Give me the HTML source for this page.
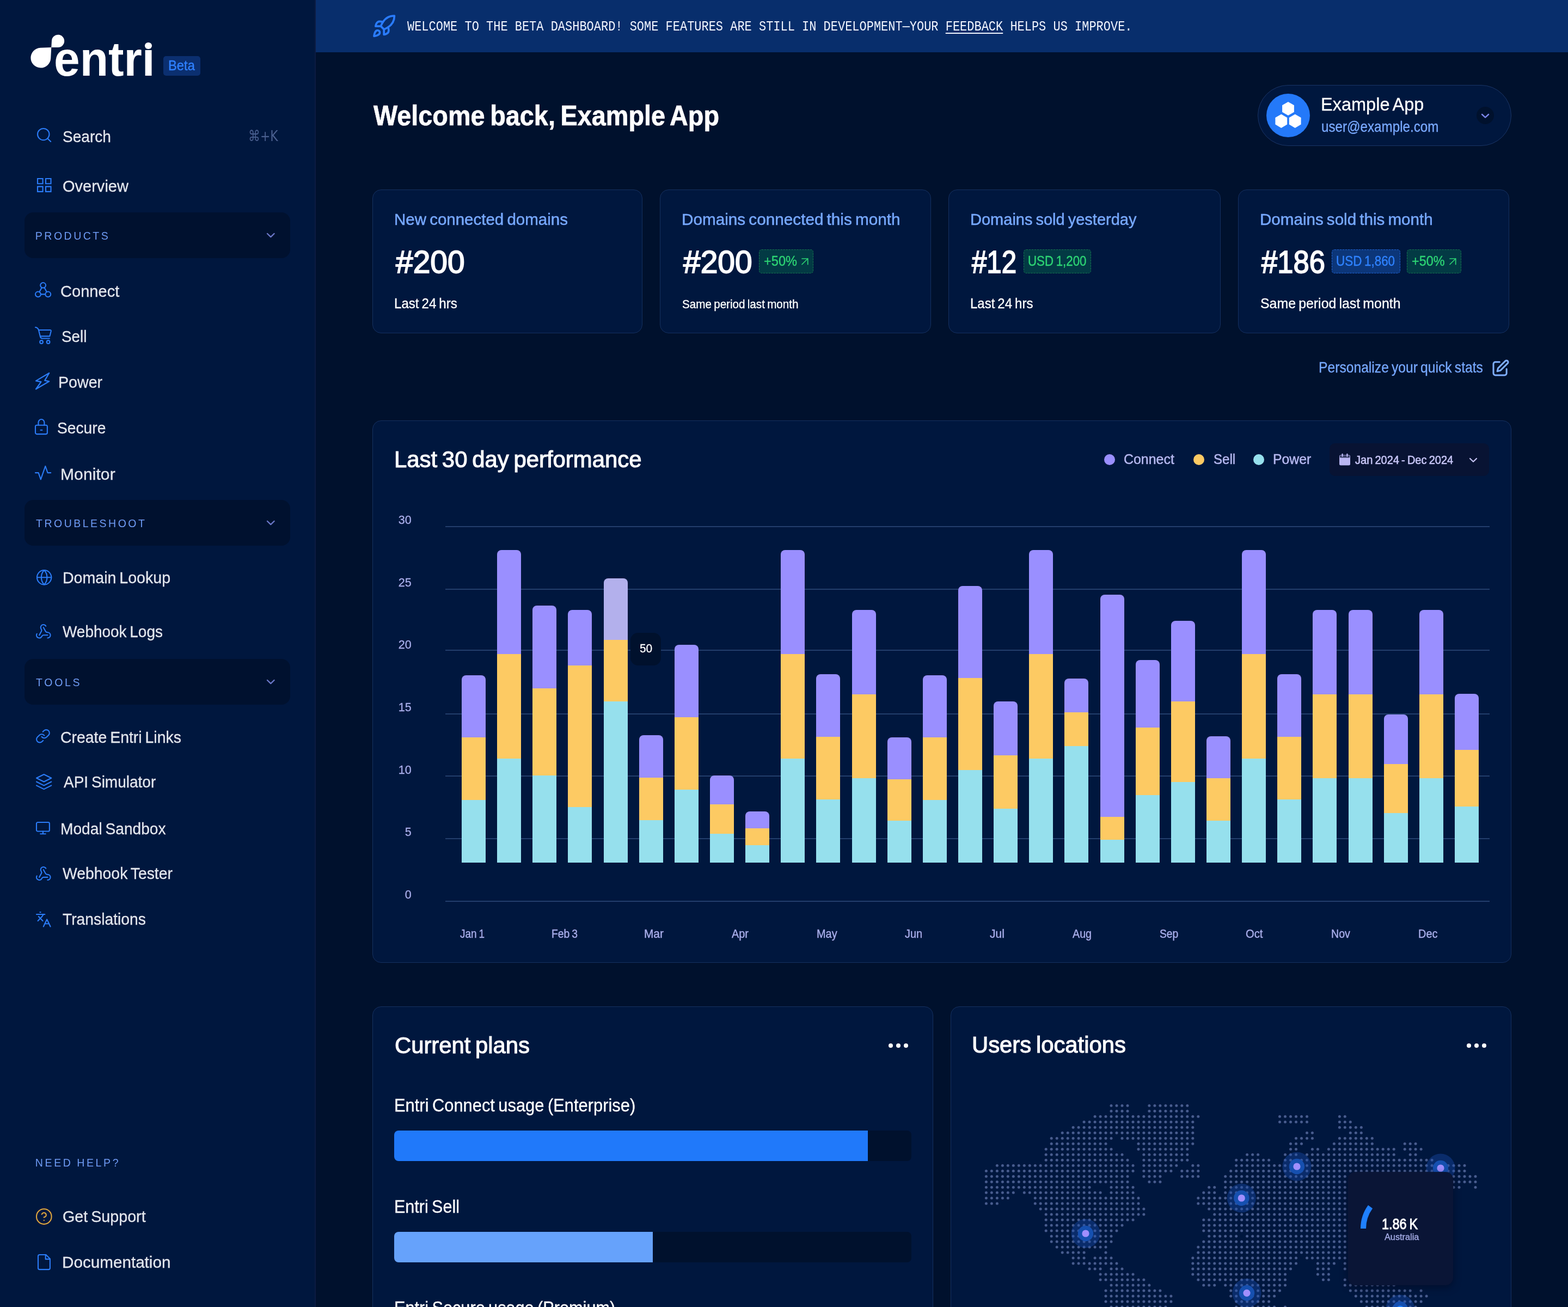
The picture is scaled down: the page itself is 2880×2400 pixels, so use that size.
<!DOCTYPE html>
<html lang="en">
<head>
<meta charset="utf-8">
<title>Entri Dashboard</title>
<style>
html,body{margin:0;padding:0;background:#00112d;}
body{position:relative;width:2880px;height:2400px;overflow:hidden;font-family:"Liberation Sans",sans-serif;color:#fff;}
#app{position:absolute;left:0;top:0;width:2880px;height:2400px;overflow:hidden;transform-origin:0 0;background:#00112d;filter:blur(0.6px);}
#app div,#app span,#app svg,#app aside,#app header,#app main,#app section,#app nav,#app a,#app h1,#app h2,#app p{position:absolute;margin:0;padding:0;box-sizing:border-box;}
.t{white-space:pre;line-height:1;font-weight:400;transform-origin:0 0;}
svg.ic{overflow:visible;stroke-linecap:round;stroke-linejoin:round;}
svg.ic *{vector-effect:non-scaling-stroke;}
.g{left:0;top:0;width:0;height:0;}
</style>
</head>
<body>
<div id="app">
<aside class="g">
<div style="left:0px;top:0px;width:580px;height:2400px;background:#00173e;border-right:2px solid #0c1b42;"></div>
<svg style="left:50px;top:58px;width:76px;height:76px" viewBox="50 58 76 76"><g fill="#fff"><path d="M94.3 87.0 L74.1 87.8 A18.4 18.4 0 1 0 93.2 107.2 Z"/><path d="M94.3 87.0 L106.6 87.0 A11.6 11.6 0 1 0 95.0 74.7 Z"/></g></svg>
<span class="t" style="left:98.58px;top:63.65px;font-size:89.0px;color:#fff;font-weight:700;transform:scaleX(0.9625);">entri</span>
<div style="left:262px;top:58px;width:22px;height:33px;background:#00173e;"></div>
<div style="left:265.8px;top:77.6px;width:12.8px;height:12.8px;background:#fff;border-radius:50%;"></div>
<div style="left:300px;top:103px;width:68px;height:36px;background:#0b2f70;border-radius:5px;"></div>
<span class="t" style="left:309.4px;top:107.83px;font-size:25.5px;color:#2f80ff;-webkit-text-stroke:0.4px #2f80ff;transform:scaleX(0.9310);">Beta</span>
<svg class="ic" style="left:68.75px;top:236.05px;width:24.2px;height:23.9px;stroke:#2b7cf7;stroke-width:2.1px;fill:none;" viewBox="3 3 18 18" preserveAspectRatio="none"><circle cx="11" cy="11" r="8"/><path d="M21 21l-4.3-4.3"/></svg>
<span class="t" style="left:115.47px;top:235.5px;font-size:30.0px;color:#e3e6ed;-webkit-text-stroke:0.3px #e3e6ed;transform:scaleX(0.9362);">Search</span>
<span class="t" style="left:456.33px;top:235.74px;font-size:27.0px;color:#4a5f8f;font-family:'DejaVu Sans', 'Liberation Sans', sans-serif;transform:scaleX(0.8103);">⌘+K</span>
<svg class="ic" style="left:68.75px;top:328.05px;width:24.5px;height:23.9px;stroke:#2b7cf7;stroke-width:2.1px;fill:none;stroke-linejoin:miter;" viewBox="3 3 18 18" preserveAspectRatio="none"><rect x="3" y="3" width="7" height="7"/><rect x="14" y="3" width="7" height="7"/><rect x="14" y="14" width="7" height="7"/><rect x="3" y="14" width="7" height="7"/></svg>
<span class="t" style="left:115.45px;top:326.5px;font-size:30.0px;color:#e3e6ed;-webkit-text-stroke:0.3px #e3e6ed;transform:scaleX(0.9671);">Overview</span>
<div style="left:45px;top:390px;width:488px;height:84px;background:#00112f;border-radius:16px;"></div>
<span class="t" style="left:64.87px;top:424.03px;font-size:19.5px;color:#6f9bf3;letter-spacing:3.49px;-webkit-text-stroke:0.01px #6f9bf3;">PRODUCTS</span>
<svg class="ic" style="left:491.2px;top:428.7px;width:12.6px;height:6.1px;stroke:#6a78c8;stroke-width:2.4px;fill:none;" viewBox="6 9 12 6" preserveAspectRatio="none"><path d="M6 9l6 6 6-6"/></svg>
<svg class="ic" style="left:65.05px;top:519.05px;width:28.2px;height:26.2px;stroke:#2b7cf7;stroke-width:2.1px;fill:none;" viewBox="1 1 22 21" preserveAspectRatio="none"><circle cx="12" cy="4.86" r="3.86"/><circle cx="4.86" cy="18.14" r="3.86"/><circle cx="19.14" cy="18.14" r="3.86"/><path d="M10.17 8.26L6.69 14.74M13.83 8.26L17.31 14.74M8.72 18.14L15.28 18.14"/></svg>
<span class="t" style="left:111.09px;top:519.8px;font-size:30.0px;color:#e3e6ed;-webkit-text-stroke:0.3px #e3e6ed;transform:scaleX(0.9687);">Connect</span>
<svg class="ic" style="left:65.05px;top:601.05px;width:28.9px;height:29.9px;stroke:#2b7cf7;stroke-width:2.1px;fill:none;" viewBox="1 1.5 23.5 23.8" preserveAspectRatio="none"><path d="M1 1.5c3 .3 4.3 1.6 5 4.5l2.3 9.2c.4 1.7 1.5 2.6 3.2 2.6H22"/><path d="M6 5.5h17.2c.9 0 1.4.7 1.2 1.6l-1.9 7.4H8.2"/><circle cx="10" cy="23" r="2.3"/><circle cx="20.2" cy="23" r="2.3"/></svg>
<span class="t" style="left:113.19px;top:603.2px;font-size:30.0px;color:#e3e6ed;-webkit-text-stroke:0.3px #e3e6ed;transform:scaleX(0.9274);">Sell</span>
<svg class="ic" style="left:65.6px;top:685.4px;width:24.3px;height:29.5px;stroke:#2b7cf7;stroke-width:2.2px;fill:none;" viewBox="1.5 1.5 21.0 26.0" preserveAspectRatio="none"><path d="M22.5 1.5L1.5 14.2l8.2 1.5L1.5 27.5 22.5 15l-7-1.5z"/></svg>
<span class="t" style="left:106.83px;top:686.9px;font-size:30.0px;color:#e3e6ed;-webkit-text-stroke:0.3px #e3e6ed;transform:scaleX(0.9538);">Power</span>
<svg class="ic" style="left:65.05px;top:770.45px;width:21.9px;height:27.1px;stroke:#2b7cf7;stroke-width:2.1px;fill:none;" viewBox="3 2.5 18 21.5" preserveAspectRatio="none"><rect x="3" y="11" width="18" height="13" rx="2"/><path d="M7.5 11V7a4.5 4.5 0 0 1 9 0v4"/><path d="M10.8 18.2h2.4"/></svg>
<span class="t" style="left:105.47px;top:771.2px;font-size:30.0px;color:#e3e6ed;-webkit-text-stroke:0.3px #e3e6ed;transform:scaleX(0.9403);">Secure</span>
<svg class="ic" style="left:65.05px;top:856.05px;width:28.2px;height:24.3px;stroke:#2b7cf7;stroke-width:2.1px;fill:none;" viewBox="2 3 20 18" preserveAspectRatio="none"><path d="M2 12h4l3 9 6-18 3 9h4"/></svg>
<span class="t" style="left:111.03px;top:855.5px;font-size:30.0px;color:#e3e6ed;letter-spacing:0.1px;-webkit-text-stroke:0.3px #e3e6ed;">Monitor</span>
<div style="left:45px;top:918.3px;width:488px;height:84px;background:#00112f;border-radius:16px;"></div>
<span class="t" style="left:65.99px;top:952.32px;font-size:19.5px;color:#6f9bf3;letter-spacing:3.5px;-webkit-text-stroke:0.01px #6f9bf3;">TROUBLESHOOT</span>
<svg class="ic" style="left:491.2px;top:957px;width:12.6px;height:6.1px;stroke:#6a78c8;stroke-width:2.4px;fill:none;" viewBox="6 9 12 6" preserveAspectRatio="none"><path d="M6 9l6 6 6-6"/></svg>
<svg class="ic" style="left:67.65px;top:1046.75px;width:26.3px;height:26.5px;stroke:#2b7cf7;stroke-width:2.1px;fill:none;" viewBox="2 2 20 20" preserveAspectRatio="none"><circle cx="12" cy="12" r="10"/><path d="M12 2a14.5 14.5 0 0 0 0 20 14.5 14.5 0 0 0 0-20"/><path d="M2 12h20"/></svg>
<span class="t" style="left:114.54px;top:1045.5px;font-size:30.0px;color:#e3e6ed;word-spacing:-0.07em;-webkit-text-stroke:0.3px #e3e6ed;transform:scaleX(0.9519);">Domain Lookup</span>
<svg class="ic" style="left:67.05px;top:1147.35px;width:25.6px;height:24.5px;stroke:#2b7cf7;stroke-width:2.1px;fill:none;" viewBox="2 2 20 19" preserveAspectRatio="none"><path d="M18 16.98h-5.99c-1.1 0-1.95.94-2.48 1.9A4 4 0 0 1 2 17c.01-.7.2-1.4.57-2"/><path d="M6 17l3.13-5.78c.53-.97.1-2.18-.5-3.1a4 4 0 1 1 6.89-4.06"/><path d="M12 6l3.13 5.73C15.66 12.7 16.9 13 18 13a4 4 0 0 1 0 8"/></svg>
<span class="t" style="left:114.55px;top:1144.9px;font-size:30.0px;color:#e3e6ed;word-spacing:-0.07em;-webkit-text-stroke:0.3px #e3e6ed;transform:scaleX(0.9313);">Webhook Logs</span>
<div style="left:45px;top:1210px;width:488px;height:84px;background:#00112f;border-radius:16px;"></div>
<span class="t" style="left:65.99px;top:1244.02px;font-size:19.5px;color:#6f9bf3;letter-spacing:3.71px;-webkit-text-stroke:0.01px #6f9bf3;">TOOLS</span>
<svg class="ic" style="left:491.2px;top:1248.7px;width:12.6px;height:6.1px;stroke:#6a78c8;stroke-width:2.4px;fill:none;" viewBox="6 9 12 6" preserveAspectRatio="none"><path d="M6 9l6 6 6-6"/></svg>
<svg class="ic" style="left:67.05px;top:1340.45px;width:23.9px;height:23.5px;stroke:#2b7cf7;stroke-width:2.1px;fill:none;" viewBox="2 2 20 20" preserveAspectRatio="none"><path d="M10 13a5 5 0 0 0 7.54.54l3-3a5 5 0 0 0-7.07-7.07l-1.72 1.71"/><path d="M14 11a5 5 0 0 0-7.54-.54l-3 3a5 5 0 0 0 7.07 7.07l1.71-1.71"/></svg>
<span class="t" style="left:111.12px;top:1338.9px;font-size:30.0px;color:#e3e6ed;word-spacing:-0.07em;-webkit-text-stroke:0.3px #e3e6ed;transform:scaleX(0.9473);">Create Entri Links</span>
<svg class="ic" style="left:67.35px;top:1422.45px;width:27.3px;height:27.1px;stroke:#2b7cf7;stroke-width:2.1px;fill:none;" viewBox="2 2 20 20" preserveAspectRatio="none"><path d="M12 2L2 7l10 5 10-5-10-5z"/><path d="M2 17l10 5 10-5"/><path d="M2 12l10 5 10-5"/></svg>
<span class="t" style="left:116.55px;top:1421.2px;font-size:30.0px;color:#e3e6ed;word-spacing:-0.07em;-webkit-text-stroke:0.3px #e3e6ed;transform:scaleX(0.9336);">API Simulator</span>
<svg class="ic" style="left:67.05px;top:1509.65px;width:23.9px;height:21.3px;stroke:#2b7cf7;stroke-width:2.1px;fill:none;" viewBox="2 3 20 18" preserveAspectRatio="none"><rect x="2" y="3" width="20" height="14" rx="2"/><path d="M8 21h8M12 17v4"/></svg>
<span class="t" style="left:110.87px;top:1506.9px;font-size:30.0px;color:#e3e6ed;word-spacing:-0.07em;-webkit-text-stroke:0.3px #e3e6ed;transform:scaleX(0.9378);">Modal Sandbox</span>
<svg class="ic" style="left:67.05px;top:1591.65px;width:25.6px;height:23.9px;stroke:#2b7cf7;stroke-width:2.1px;fill:none;" viewBox="2 2 20 19" preserveAspectRatio="none"><path d="M18 16.98h-5.99c-1.1 0-1.95.94-2.48 1.9A4 4 0 0 1 2 17c.01-.7.2-1.4.57-2"/><path d="M6 17l3.13-5.78c.53-.97.1-2.18-.5-3.1a4 4 0 1 1 6.89-4.06"/><path d="M12 6l3.13 5.73C15.66 12.7 16.9 13 18 13a4 4 0 0 1 0 8"/></svg>
<span class="t" style="left:114.54px;top:1589.2px;font-size:30.0px;color:#e3e6ed;word-spacing:-0.07em;-webkit-text-stroke:0.3px #e3e6ed;transform:scaleX(0.9455);">Webhook Tester</span>
<svg class="ic" style="left:67.05px;top:1674.75px;width:25.6px;height:26.5px;stroke:#2b7cf7;stroke-width:2.1px;fill:none;" viewBox="2 2 20 20" preserveAspectRatio="none"><path d="M5 8l6 6"/><path d="M4 14l6-6 2-3"/><path d="M2 5h12"/><path d="M7 2h1"/><path d="M22 22l-5-10-5 10"/><path d="M14 18h6"/></svg>
<span class="t" style="left:114.89px;top:1672.5px;font-size:30.0px;color:#e3e6ed;-webkit-text-stroke:0.3px #e3e6ed;transform:scaleX(0.9419);">Translations</span>
<span class="t" style="left:64.87px;top:2126.33px;font-size:19.5px;color:#6f9bf3;letter-spacing:3.63px;word-spacing:-0.07em;-webkit-text-stroke:0.01px #6f9bf3;">NEED HELP?</span>
<svg class="ic" style="left:67.05px;top:2220.05px;width:27.6px;height:27.9px;stroke:#e0a63e;stroke-width:2.1px;fill:none;" viewBox="2 2 20 20" preserveAspectRatio="none"><circle cx="12" cy="12" r="10"/><path d="M9.09 9a3 3 0 0 1 5.83 1c0 2-3 3-3 3"/><path d="M12 17h.01"/></svg>
<span class="t" style="left:115.41px;top:2219.2px;font-size:30.0px;color:#e3e6ed;word-spacing:-0.07em;-webkit-text-stroke:0.3px #e3e6ed;transform:scaleX(0.9558);">Get Support</span>
<svg class="ic" style="left:70.05px;top:2304.45px;width:21.9px;height:27.1px;stroke:#2b7cf7;stroke-width:2.1px;fill:none;" viewBox="4 2 16 20" preserveAspectRatio="none"><path d="M14.5 2H6a2 2 0 0 0-2 2v16a2 2 0 0 0 2 2h12a2 2 0 0 0 2-2V7.5L14.5 2z"/><path d="M14 2v6h6"/></svg>
<span class="t" style="left:114.45px;top:2303.2px;font-size:30.0px;color:#e3e6ed;-webkit-text-stroke:0.3px #e3e6ed;transform:scaleX(0.9883);">Documentation</span>
</aside>
<header class="g">
<div style="left:580px;top:0px;width:2300px;height:96px;background:#082e6c;"></div>
<svg class="ic" style="left:687.45px;top:28.85px;width:37.4px;height:37.3px;stroke:#2a7cff;stroke-width:3.7px;fill:none;" viewBox="2.5 2 19.5 19.5" preserveAspectRatio="none"><path d="M4.5 16.5c-1.5 1.26-2 5-2 5s3.74-.5 5-2c.71-.84.7-2.13-.09-2.91a2.18 2.18 0 0 0-2.91-.09z"/><path d="M12 15l-3-3a22 22 0 0 1 2-3.95A12.88 12.88 0 0 1 22 2c0 2.72-.78 7.5-6 11a22.35 22.35 0 0 1-4 2z"/><path d="M9 12H4s.55-3.03 2-4c1.62-1.08 5 0 5 0"/><path d="M12 15v5s3.03-.55 4-2c1.08-1.62 0-5 0-5"/></svg>
<span class="t" style="left:748.27px;top:36.92px;font-size:25.5px;color:#f2f5ff;font-family:'Liberation Mono', monospace;transform:scaleX(0.8615);">WELCOME TO THE BETA DASHBOARD! SOME FEATURES ARE STILL IN DEVELOPMENT—YOUR <u style="text-underline-offset:4px;text-decoration-thickness:2px">FEEDBACK</u> HELPS US IMPROVE.</span>
</header>
<main class="g">
<span class="t" style="left:686.44px;top:186.92px;font-size:51.5px;color:#fff;font-weight:700;word-spacing:-0.07em;-webkit-text-stroke:0.7px #fff;transform:scaleX(0.9084);">Welcome back, Example App</span>
<div style="left:2310px;top:156px;width:466px;height:112px;background:#00173e;border:1px solid #1a3566;border-radius:56px;"></div>
<div style="left:2326px;top:172px;width:80px;height:80px;background:#2479f9;border-radius:50%;"></div>
<svg style="left:2326px;top:172px;width:80px;height:80px" viewBox="2326 172 80 80" fill="#fff"><polygon points="2376.9,205.8 2366.0,212.1 2355.1,205.8 2355.1,193.2 2366.0,186.9 2376.9,193.2"/><polygon points="2364.2,228.6 2353.3,234.9 2342.4,228.6 2342.4,216.0 2353.3,209.7 2364.2,216.0"/><polygon points="2389.6,228.6 2378.7,234.9 2367.8,228.6 2367.8,216.0 2378.7,209.7 2389.6,216.0"/></svg>
<span class="t" style="left:2425.58px;top:173.5px;font-size:34.0px;color:#fff;word-spacing:-0.07em;-webkit-text-stroke:0.3px #fff;transform:scaleX(0.9562);">Example App</span>
<span class="t" style="left:2426.68px;top:219.2px;font-size:28.0px;color:#7aaaff;-webkit-text-stroke:0.3px #7aaaff;transform:scaleX(0.8634);">user@example.com</span>
<div style="left:2712px;top:196px;width:32px;height:32px;background:#00112d;border-radius:50%;"></div>
<svg class="ic" style="left:2722.2px;top:209.7px;width:12.1px;height:5.6px;stroke:#7a86e8;stroke-width:2.4px;fill:none;" viewBox="6 9 12 6" preserveAspectRatio="none"><path d="M6 9l6 6 6-6"/></svg>
<section style="left:684px;top:348px;width:496px;height:264px;background:#00173e;border:1px solid #15305f;border-radius:16px;"></section>
<section style="left:1212px;top:348px;width:498px;height:264px;background:#00173e;border:1px solid #15305f;border-radius:16px;"></section>
<section style="left:1742px;top:348px;width:500px;height:264px;background:#00173e;border:1px solid #15305f;border-radius:16px;"></section>
<section style="left:2274px;top:348px;width:498px;height:264px;background:#00173e;border:1px solid #15305f;border-radius:16px;"></section>
<span class="t" style="left:723.83px;top:387.8px;font-size:30.0px;color:#77a9ff;word-spacing:-0.07em;-webkit-text-stroke:0.5px #77a9ff;transform:scaleX(0.9833);">New connected domains</span>
<span class="t" style="left:1251.82px;top:387.8px;font-size:30.0px;color:#77a9ff;word-spacing:-0.07em;-webkit-text-stroke:0.5px #77a9ff;transform:scaleX(0.9900);">Domains connected this month</span>
<span class="t" style="left:1781.87px;top:387.8px;font-size:30.0px;color:#77a9ff;word-spacing:-0.07em;-webkit-text-stroke:0.5px #77a9ff;transform:scaleX(0.9669);">Domains sold yesterday</span>
<span class="t" style="left:2313.83px;top:387.8px;font-size:30.0px;color:#77a9ff;word-spacing:-0.07em;-webkit-text-stroke:0.5px #77a9ff;transform:scaleX(0.9860);">Domains sold this month</span>
<span class="t" style="left:726.69px;top:451.7px;font-size:58.0px;color:#fff;-webkit-text-stroke:1.8px #fff;transform:scaleX(0.9816);">#200</span>
<span class="t" style="left:1254.69px;top:451.7px;font-size:58.0px;color:#fff;-webkit-text-stroke:1.8px #fff;transform:scaleX(0.9816);">#200</span>
<span class="t" style="left:1784.6px;top:451.7px;font-size:58.0px;color:#fff;-webkit-text-stroke:1.8px #fff;transform:scaleX(0.8483);">#12</span>
<span class="t" style="left:2316.64px;top:451.7px;font-size:58.0px;color:#fff;-webkit-text-stroke:1.8px #fff;transform:scaleX(0.9057);">#186</span>
<div style="left:1394.3px;top:458px;width:99.4px;height:44px;background:#033a44;border:1px dashed #17744f;border-radius:5px;"></div>
<span class="t" style="left:1402.86px;top:467.32px;font-size:25.5px;color:#2dd474;-webkit-text-stroke:0.4px #2dd474;transform:scaleX(0.9254);">+50%</span>
<svg class="ic" style="left:1472.85px;top:475.15px;width:10.7px;height:10.5px;stroke:#2dd474;stroke-width:1.7px;fill:none;" viewBox="7 7 10 10" preserveAspectRatio="none"><path d="M7 7h10v10"/><path d="M7 17L17 7"/></svg>
<div style="left:1880px;top:458px;width:123.7px;height:44px;background:#033a44;border:1px dashed #17744f;border-radius:5px;"></div>
<span class="t" style="left:1888.16px;top:467.32px;font-size:25.5px;color:#2dd474;word-spacing:-0.07em;-webkit-text-stroke:0.4px #2dd474;transform:scaleX(0.8739);">USD 1,200</span>
<div style="left:2446.3px;top:458px;width:125.7px;height:44px;background:#0c3679;border:1px dashed #1f62d2;border-radius:5px;"></div>
<span class="t" style="left:2454.46px;top:467.32px;font-size:25.5px;color:#2f82ff;word-spacing:-0.07em;-webkit-text-stroke:0.4px #2f82ff;transform:scaleX(0.8789);">USD 1,860</span>
<div style="left:2584.3px;top:458px;width:99.7px;height:44px;background:#033a44;border:1px dashed #17744f;border-radius:5px;"></div>
<span class="t" style="left:2593.37px;top:467.32px;font-size:25.5px;color:#2dd474;-webkit-text-stroke:0.4px #2dd474;transform:scaleX(0.9176);">+50%</span>
<svg class="ic" style="left:2662.85px;top:475.15px;width:10.7px;height:10.5px;stroke:#2dd474;stroke-width:1.7px;fill:none;" viewBox="7 7 10 10" preserveAspectRatio="none"><path d="M7 7h10v10"/><path d="M7 17L17 7"/></svg>
<span class="t" style="left:724.33px;top:545.33px;font-size:25.5px;color:#fff;word-spacing:-0.07em;-webkit-text-stroke:0.3px #fff;transform:scaleX(0.9450);">Last 24 hrs</span>
<span class="t" style="left:1253.28px;top:548.73px;font-size:21.5px;color:#fff;word-spacing:-0.07em;-webkit-text-stroke:0.3px #fff;transform:scaleX(0.9592);">Same period last month</span>
<span class="t" style="left:1782.33px;top:545.33px;font-size:25.5px;color:#fff;word-spacing:-0.07em;-webkit-text-stroke:0.3px #fff;transform:scaleX(0.9416);">Last 24 hrs</span>
<span class="t" style="left:2314.71px;top:545.33px;font-size:25.5px;color:#fff;word-spacing:-0.07em;-webkit-text-stroke:0.3px #fff;transform:scaleX(0.9755);">Same period last month</span>
<span class="t" style="left:2421.99px;top:660.8px;font-size:28.0px;color:#77a9ff;word-spacing:-0.07em;-webkit-text-stroke:0.3px #77a9ff;transform:scaleX(0.8809);">Personalize your quick stats</span>
<svg class="ic" style="left:2742.5px;top:661.8px;width:27px;height:26.9px;stroke:#80b0ff;stroke-width:3px;fill:none;" viewBox="3 2 19 19" preserveAspectRatio="none"><path d="M11 4H5.5A2.5 2.5 0 0 0 3 6.500v12A2.500 2.500 0 0 0 5.500 21h12a2.500 2.500 0 0 0 2.500-2.500V13"/><path d="M18.4 2.600a2.100 2.100 0 0 1 3 3L12 15l-4 1 1-4z"/></svg>
<section style="left:684px;top:772px;width:2092px;height:996px;background:#00173e;border:1px solid #15305f;border-radius:16px;"></section>
<span class="t" style="left:723.64px;top:821.95px;font-size:43.0px;color:#fff;word-spacing:-0.07em;-webkit-text-stroke:1.1px #fff;transform:scaleX(0.9740);">Last 30 day performance</span>
<div style="left:2027.9px;top:833.7px;width:20px;height:20px;background:#9a8fff;border-radius:50%;"></div>
<span class="t" style="left:2064.47px;top:830.83px;font-size:25.5px;color:#b5b8ef;-webkit-text-stroke:0.5px #b5b8ef;transform:scaleX(0.9773);">Connect</span>
<div style="left:2192px;top:833.7px;width:20px;height:20px;background:#fdca63;border-radius:50%;"></div>
<span class="t" style="left:2228.81px;top:830.83px;font-size:25.5px;color:#b5b8ef;-webkit-text-stroke:0.5px #b5b8ef;transform:scaleX(0.9433);">Sell</span>
<div style="left:2302.2px;top:833.7px;width:20px;height:20px;background:#96e0ed;border-radius:50%;"></div>
<span class="t" style="left:2338.35px;top:830.83px;font-size:25.5px;color:#b5b8ef;-webkit-text-stroke:0.5px #b5b8ef;transform:scaleX(0.9716);">Power</span>
<div style="left:2442.3px;top:814.3px;width:292.7px;height:59.4px;background:#081333;border-radius:10px;"></div>
<svg style="left:2459px;top:832px;width:22px;height:24px" viewBox="0 0 22 24"><rect x="1" y="3.5" width="20" height="19" rx="2.5" fill="#b9b6f2"/><rect x="1.8" y="4.3" width="18.4" height="4.2" rx="1.6" fill="#081333" opacity=".75"/><rect x="5.4" y="0.8" width="2.4" height="6" rx="1.2" fill="#b9b6f2"/><rect x="14.2" y="0.8" width="2.400" height="6" rx="1.200" fill="#b9b6f2"/></svg>
<span class="t" style="left:2488.85px;top:835.33px;font-size:21.5px;color:#c6c5f5;word-spacing:-0.07em;-webkit-text-stroke:0.6px #c6c5f5;transform:scaleX(0.9305);">Jan 2024 - Dec 2024</span>
<svg class="ic" style="left:2699.9px;top:841.5px;width:12px;height:5.8px;stroke:#c6c5f5;stroke-width:2.2px;fill:none;" viewBox="6 9 12 6" preserveAspectRatio="none"><path d="M6 9l6 6 6-6"/></svg>
<div style="left:818px;top:966px;width:1918px;height:2px;background:#233e6c;"></div>
<span class="t" style="left:731.73px;top:944.93px;font-size:21.5px;color:#a9aeea;-webkit-text-stroke:0.3px #a9aeea;">30</span>
<div style="left:818px;top:1081px;width:1918px;height:2px;background:#233e6c;"></div>
<span class="t" style="left:731.81px;top:1059.52px;font-size:21.5px;color:#a9aeea;-webkit-text-stroke:0.3px #a9aeea;">25</span>
<div style="left:818px;top:1193px;width:1918px;height:2px;background:#233e6c;"></div>
<span class="t" style="left:731.73px;top:1174.22px;font-size:21.5px;color:#a9aeea;-webkit-text-stroke:0.3px #a9aeea;">20</span>
<div style="left:818px;top:1309.6px;width:1918px;height:2px;background:#233e6c;"></div>
<span class="t" style="left:731.81px;top:1288.92px;font-size:21.5px;color:#a9aeea;-webkit-text-stroke:0.3px #a9aeea;">15</span>
<div style="left:818px;top:1424.3px;width:1918px;height:2px;background:#233e6c;"></div>
<span class="t" style="left:731.73px;top:1403.52px;font-size:21.5px;color:#a9aeea;-webkit-text-stroke:0.3px #a9aeea;">10</span>
<div style="left:818px;top:1539px;width:1918px;height:2px;background:#233e6c;"></div>
<span class="t" style="left:743.81px;top:1518.22px;font-size:21.5px;color:#a9aeea;-webkit-text-stroke:0.3px #a9aeea;">5</span>
<div style="left:818px;top:1654px;width:1918px;height:2px;background:#233e6c;"></div>
<span class="t" style="left:743.73px;top:1632.52px;font-size:21.5px;color:#a9aeea;-webkit-text-stroke:0.3px #a9aeea;">0</span>
<div style="left:848px;top:1240px;width:44px;height:344px;border-radius:8px 8px 0 0;overflow:hidden;"><div style="left:0;top:0;width:44px;height:114.2px;background:#9a8fff"></div><div style="left:0;top:114.2px;width:44px;height:114.8px;background:#fdca63"></div><div style="left:0;top:229px;width:44px;height:115px;background:#96e0ed"></div></div>
<div style="left:913.14px;top:1009.6px;width:44px;height:574.4px;border-radius:8px 8px 0 0;overflow:hidden;"><div style="left:0;top:0;width:44px;height:191.3px;background:#9a8fff"></div><div style="left:0;top:191.3px;width:44px;height:191.7px;background:#fdca63"></div><div style="left:0;top:383px;width:44px;height:191.4px;background:#96e0ed"></div></div>
<div style="left:978.28px;top:1111.8px;width:44px;height:472.2px;border-radius:8px 8px 0 0;overflow:hidden;"><div style="left:0;top:0;width:44px;height:151.9px;background:#9a8fff"></div><div style="left:0;top:151.9px;width:44px;height:160.4px;background:#fdca63"></div><div style="left:0;top:312.3px;width:44px;height:159.9px;background:#96e0ed"></div></div>
<div style="left:1043.42px;top:1120px;width:44px;height:464px;border-radius:8px 8px 0 0;overflow:hidden;"><div style="left:0;top:0;width:44px;height:101.8px;background:#9a8fff"></div><div style="left:0;top:101.8px;width:44px;height:259.9px;background:#fdca63"></div><div style="left:0;top:361.7px;width:44px;height:102.3px;background:#96e0ed"></div></div>
<div style="left:1108.56px;top:1062px;width:44px;height:522px;border-radius:8px 8px 0 0;overflow:hidden;"><div style="left:0;top:0;width:44px;height:112.9px;background:#b3b0ec"></div><div style="left:0;top:112.9px;width:44px;height:113.1px;background:#fdca63"></div><div style="left:0;top:226px;width:44px;height:296px;background:#96e0ed"></div></div>
<div style="left:1173.7px;top:1350px;width:44px;height:234px;border-radius:8px 8px 0 0;overflow:hidden;"><div style="left:0;top:0;width:44px;height:77.9px;background:#9a8fff"></div><div style="left:0;top:77.9px;width:44px;height:78.1px;background:#fdca63"></div><div style="left:0;top:156px;width:44px;height:78px;background:#96e0ed"></div></div>
<div style="left:1238.84px;top:1183.8px;width:44px;height:400.2px;border-radius:8px 8px 0 0;overflow:hidden;"><div style="left:0;top:0;width:44px;height:133.3px;background:#9a8fff"></div><div style="left:0;top:133.3px;width:44px;height:133.4px;background:#fdca63"></div><div style="left:0;top:266.7px;width:44px;height:133.5px;background:#96e0ed"></div></div>
<div style="left:1303.98px;top:1424.1px;width:44px;height:159.9px;border-radius:8px 8px 0 0;overflow:hidden;"><div style="left:0;top:0;width:44px;height:52.8px;background:#9a8fff"></div><div style="left:0;top:52.8px;width:44px;height:53.8px;background:#fdca63"></div><div style="left:0;top:106.6px;width:44px;height:53.3px;background:#96e0ed"></div></div>
<div style="left:1369.12px;top:1490px;width:44px;height:94px;border-radius:8px 8px 0 0;overflow:hidden;"><div style="left:0;top:0;width:44px;height:30.8px;background:#9a8fff"></div><div style="left:0;top:30.8px;width:44px;height:31.5px;background:#fdca63"></div><div style="left:0;top:62.3px;width:44px;height:31.7px;background:#96e0ed"></div></div>
<div style="left:1434.26px;top:1009.6px;width:44px;height:574.4px;border-radius:8px 8px 0 0;overflow:hidden;"><div style="left:0;top:0;width:44px;height:191.3px;background:#9a8fff"></div><div style="left:0;top:191.3px;width:44px;height:191.7px;background:#fdca63"></div><div style="left:0;top:383px;width:44px;height:191.4px;background:#96e0ed"></div></div>
<div style="left:1499.4px;top:1237.9px;width:44px;height:346.1px;border-radius:8px 8px 0 0;overflow:hidden;"><div style="left:0;top:0;width:44px;height:115.2px;background:#9a8fff"></div><div style="left:0;top:115.2px;width:44px;height:115.2px;background:#fdca63"></div><div style="left:0;top:230.4px;width:44px;height:115.7px;background:#96e0ed"></div></div>
<div style="left:1564.54px;top:1120px;width:44px;height:464px;border-radius:8px 8px 0 0;overflow:hidden;"><div style="left:0;top:0;width:44px;height:154.6px;background:#9a8fff"></div><div style="left:0;top:154.6px;width:44px;height:154.7px;background:#fdca63"></div><div style="left:0;top:309.3px;width:44px;height:154.7px;background:#96e0ed"></div></div>
<div style="left:1629.68px;top:1353.8px;width:44px;height:230.2px;border-radius:8px 8px 0 0;overflow:hidden;"><div style="left:0;top:0;width:44px;height:76.8px;background:#9a8fff"></div><div style="left:0;top:76.8px;width:44px;height:76.5px;background:#fdca63"></div><div style="left:0;top:153.3px;width:44px;height:76.9px;background:#96e0ed"></div></div>
<div style="left:1694.82px;top:1240px;width:44px;height:344px;border-radius:8px 8px 0 0;overflow:hidden;"><div style="left:0;top:0;width:44px;height:114.2px;background:#9a8fff"></div><div style="left:0;top:114.2px;width:44px;height:114.8px;background:#fdca63"></div><div style="left:0;top:229px;width:44px;height:115px;background:#96e0ed"></div></div>
<div style="left:1759.96px;top:1076.1px;width:44px;height:507.9px;border-radius:8px 8px 0 0;overflow:hidden;"><div style="left:0;top:0;width:44px;height:169px;background:#9a8fff"></div><div style="left:0;top:169px;width:44px;height:169.4px;background:#fdca63"></div><div style="left:0;top:338.4px;width:44px;height:169.5px;background:#96e0ed"></div></div>
<div style="left:1825.1px;top:1288px;width:44px;height:296px;border-radius:8px 8px 0 0;overflow:hidden;"><div style="left:0;top:0;width:44px;height:98.7px;background:#9a8fff"></div><div style="left:0;top:98.7px;width:44px;height:98.4px;background:#fdca63"></div><div style="left:0;top:197.1px;width:44px;height:98.9px;background:#96e0ed"></div></div>
<div style="left:1890.24px;top:1009.6px;width:44px;height:574.4px;border-radius:8px 8px 0 0;overflow:hidden;"><div style="left:0;top:0;width:44px;height:191.3px;background:#9a8fff"></div><div style="left:0;top:191.3px;width:44px;height:191.7px;background:#fdca63"></div><div style="left:0;top:383px;width:44px;height:191.4px;background:#96e0ed"></div></div>
<div style="left:1955.38px;top:1245.8px;width:44px;height:338.2px;border-radius:8px 8px 0 0;overflow:hidden;"><div style="left:0;top:0;width:44px;height:62.1px;background:#9a8fff"></div><div style="left:0;top:62.1px;width:44px;height:62px;background:#fdca63"></div><div style="left:0;top:124.1px;width:44px;height:214.1px;background:#96e0ed"></div></div>
<div style="left:2020.52px;top:1091.9px;width:44px;height:492.1px;border-radius:8px 8px 0 0;overflow:hidden;"><div style="left:0;top:0;width:44px;height:408px;background:#9a8fff"></div><div style="left:0;top:408px;width:44px;height:42.1px;background:#fdca63"></div><div style="left:0;top:450.1px;width:44px;height:42px;background:#96e0ed"></div></div>
<div style="left:2085.66px;top:1211.9px;width:44px;height:372.1px;border-radius:8px 8px 0 0;overflow:hidden;"><div style="left:0;top:0;width:44px;height:124.1px;background:#9a8fff"></div><div style="left:0;top:124.1px;width:44px;height:124.1px;background:#fdca63"></div><div style="left:0;top:248.2px;width:44px;height:123.9px;background:#96e0ed"></div></div>
<div style="left:2150.8px;top:1139.9px;width:44px;height:444.1px;border-radius:8px 8px 0 0;overflow:hidden;"><div style="left:0;top:0;width:44px;height:148.1px;background:#9a8fff"></div><div style="left:0;top:148.1px;width:44px;height:148.1px;background:#fdca63"></div><div style="left:0;top:296.2px;width:44px;height:147.9px;background:#96e0ed"></div></div>
<div style="left:2215.94px;top:1351.8px;width:44px;height:232.2px;border-radius:8px 8px 0 0;overflow:hidden;"><div style="left:0;top:0;width:44px;height:77.1px;background:#9a8fff"></div><div style="left:0;top:77.1px;width:44px;height:77.8px;background:#fdca63"></div><div style="left:0;top:154.9px;width:44px;height:77.3px;background:#96e0ed"></div></div>
<div style="left:2281.08px;top:1009.6px;width:44px;height:574.4px;border-radius:8px 8px 0 0;overflow:hidden;"><div style="left:0;top:0;width:44px;height:191.3px;background:#9a8fff"></div><div style="left:0;top:191.3px;width:44px;height:191.7px;background:#fdca63"></div><div style="left:0;top:383px;width:44px;height:191.4px;background:#96e0ed"></div></div>
<div style="left:2346.22px;top:1237.9px;width:44px;height:346.1px;border-radius:8px 8px 0 0;overflow:hidden;"><div style="left:0;top:0;width:44px;height:115.2px;background:#9a8fff"></div><div style="left:0;top:115.2px;width:44px;height:115.2px;background:#fdca63"></div><div style="left:0;top:230.4px;width:44px;height:115.7px;background:#96e0ed"></div></div>
<div style="left:2411.36px;top:1120px;width:44px;height:464px;border-radius:8px 8px 0 0;overflow:hidden;"><div style="left:0;top:0;width:44px;height:154.6px;background:#9a8fff"></div><div style="left:0;top:154.6px;width:44px;height:154.7px;background:#fdca63"></div><div style="left:0;top:309.3px;width:44px;height:154.7px;background:#96e0ed"></div></div>
<div style="left:2476.5px;top:1120px;width:44px;height:464px;border-radius:8px 8px 0 0;overflow:hidden;"><div style="left:0;top:0;width:44px;height:154.6px;background:#9a8fff"></div><div style="left:0;top:154.6px;width:44px;height:154.7px;background:#fdca63"></div><div style="left:0;top:309.3px;width:44px;height:154.7px;background:#96e0ed"></div></div>
<div style="left:2541.64px;top:1312px;width:44px;height:272px;border-radius:8px 8px 0 0;overflow:hidden;"><div style="left:0;top:0;width:44px;height:90.5px;background:#9a8fff"></div><div style="left:0;top:90.5px;width:44px;height:90.9px;background:#fdca63"></div><div style="left:0;top:181.4px;width:44px;height:90.6px;background:#96e0ed"></div></div>
<div style="left:2606.78px;top:1120px;width:44px;height:464px;border-radius:8px 8px 0 0;overflow:hidden;"><div style="left:0;top:0;width:44px;height:154.6px;background:#9a8fff"></div><div style="left:0;top:154.6px;width:44px;height:154.7px;background:#fdca63"></div><div style="left:0;top:309.3px;width:44px;height:154.7px;background:#96e0ed"></div></div>
<div style="left:2671.92px;top:1273.9px;width:44px;height:310.1px;border-radius:8px 8px 0 0;overflow:hidden;"><div style="left:0;top:0;width:44px;height:103.2px;background:#9a8fff"></div><div style="left:0;top:103.2px;width:44px;height:103.6px;background:#fdca63"></div><div style="left:0;top:206.8px;width:44px;height:103.3px;background:#96e0ed"></div></div>
<div style="left:1158.3px;top:1161.8px;width:55.5px;height:60px;background:#00112d;border-radius:14px;"></div>
<span class="t" style="left:1174.99px;top:1180.92px;font-size:21.5px;color:#fff;-webkit-text-stroke:0.3px #fff;transform:scaleX(0.9676);">50</span>
<span class="t" style="left:844.78px;top:1705.02px;font-size:21.5px;color:#a9aeea;word-spacing:-0.07em;-webkit-text-stroke:0.4px #a9aeea;transform:scaleX(0.8804);">Jan 1</span>
<span class="t" style="left:1012.69px;top:1705.02px;font-size:21.5px;color:#a9aeea;word-spacing:-0.07em;-webkit-text-stroke:0.4px #a9aeea;transform:scaleX(0.8963);">Feb 3</span>
<span class="t" style="left:1183.28px;top:1705.02px;font-size:21.5px;color:#a9aeea;-webkit-text-stroke:0.4px #a9aeea;transform:scaleX(0.9697);">Mar</span>
<span class="t" style="left:1343.85px;top:1705.02px;font-size:21.5px;color:#a9aeea;-webkit-text-stroke:0.4px #a9aeea;transform:scaleX(0.9218);">Apr</span>
<span class="t" style="left:1499.65px;top:1705.02px;font-size:21.5px;color:#a9aeea;-webkit-text-stroke:0.4px #a9aeea;transform:scaleX(0.9257);">May</span>
<span class="t" style="left:1662.36px;top:1705.02px;font-size:21.5px;color:#a9aeea;-webkit-text-stroke:0.4px #a9aeea;transform:scaleX(0.9272);">Jun</span>
<span class="t" style="left:1818.35px;top:1705.02px;font-size:21.5px;color:#a9aeea;-webkit-text-stroke:0.4px #a9aeea;transform:scaleX(0.9784);">Jul</span>
<span class="t" style="left:1970.15px;top:1705.02px;font-size:21.5px;color:#a9aeea;-webkit-text-stroke:0.4px #a9aeea;transform:scaleX(0.9162);">Aug</span>
<span class="t" style="left:2129.95px;top:1705.02px;font-size:21.5px;color:#a9aeea;-webkit-text-stroke:0.4px #a9aeea;transform:scaleX(0.8967);">Sep</span>
<span class="t" style="left:2288.35px;top:1705.02px;font-size:21.5px;color:#a9aeea;-webkit-text-stroke:0.4px #a9aeea;transform:scaleX(0.9396);">Oct</span>
<span class="t" style="left:2444.97px;top:1705.02px;font-size:21.5px;color:#a9aeea;-webkit-text-stroke:0.4px #a9aeea;transform:scaleX(0.9116);">Nov</span>
<span class="t" style="left:2604.95px;top:1705.02px;font-size:21.5px;color:#a9aeea;-webkit-text-stroke:0.4px #a9aeea;transform:scaleX(0.9262);">Dec</span>
<section style="left:684px;top:1848px;width:1030px;height:612px;background:#00173e;border:1px solid #15305f;border-radius:16px;"></section>
<span class="t" style="left:724.67px;top:1897.75px;font-size:43.0px;color:#fff;word-spacing:-0.07em;-webkit-text-stroke:1.1px #fff;transform:scaleX(0.9713);">Current plans</span>
<div style="left:1632px;top:1916px;width:8px;height:8px;background:#fff;border-radius:50%;"></div>
<div style="left:1646px;top:1916px;width:8px;height:8px;background:#fff;border-radius:50%;"></div>
<div style="left:1660px;top:1916px;width:8px;height:8px;background:#fff;border-radius:50%;"></div>
<span class="t" style="left:723.99px;top:2012.75px;font-size:33.0px;color:#fff;word-spacing:-0.07em;-webkit-text-stroke:0.3px #fff;transform:scaleX(0.9357);">Entri Connect usage (Enterprise)</span>
<div style="left:724px;top:2076px;width:950px;height:56px;background:#00112d;border-radius:8px;overflow:hidden;"><div style="left:0;top:0;width:870px;height:56px;background:#2079fa"></div></div>
<span class="t" style="left:724.02px;top:2198.95px;font-size:33.0px;color:#fff;word-spacing:-0.07em;-webkit-text-stroke:0.3px #fff;transform:scaleX(0.9252);">Entri Sell</span>
<div style="left:724px;top:2262px;width:950px;height:56px;background:#00112d;border-radius:8px;overflow:hidden;"><div style="left:0;top:0;width:475px;height:56px;background:#66a2fb"></div></div>
<span class="t" style="left:724.01px;top:2384.95px;font-size:33.0px;color:#fff;word-spacing:-0.07em;-webkit-text-stroke:0.3px #fff;transform:scaleX(0.9299);">Entri Secure usage (Premium)</span>
<section style="left:1746px;top:1848px;width:1030px;height:612px;background:#00173e;border:1px solid #15305f;border-radius:16px;"></section>
<span class="t" style="left:1785.49px;top:1897.05px;font-size:43.0px;color:#fff;word-spacing:-0.07em;-webkit-text-stroke:1.1px #fff;transform:scaleX(0.9724);">Users locations</span>
<div style="left:2694px;top:1916px;width:8px;height:8px;background:#fff;border-radius:50%;"></div>
<div style="left:2708px;top:1916px;width:8px;height:8px;background:#fff;border-radius:50%;"></div>
<div style="left:2722px;top:1916px;width:8px;height:8px;background:#fff;border-radius:50%;"></div>
<svg style="left:1746px;top:1990px;width:1030px;height:410px" viewBox="1746 1990 1030 410"><g fill="#485c8e"><circle cx="2041.0" cy="2030.3" r="2.5"/><circle cx="2051.0" cy="2030.3" r="2.5"/><circle cx="2061.0" cy="2030.3" r="2.5"/><circle cx="2071.0" cy="2030.3" r="2.5"/><circle cx="2110.9" cy="2030.3" r="2.5"/><circle cx="2120.9" cy="2030.3" r="2.5"/><circle cx="2130.9" cy="2030.3" r="2.5"/><circle cx="2140.9" cy="2030.3" r="2.5"/><circle cx="2150.9" cy="2030.3" r="2.5"/><circle cx="2160.8" cy="2030.3" r="2.5"/><circle cx="2170.8" cy="2030.3" r="2.5"/><circle cx="2180.8" cy="2030.3" r="2.5"/><circle cx="2041.0" cy="2040.3" r="2.5"/><circle cx="2051.0" cy="2040.3" r="2.5"/><circle cx="2061.0" cy="2040.3" r="2.5"/><circle cx="2071.0" cy="2040.3" r="2.5"/><circle cx="2110.9" cy="2040.3" r="2.5"/><circle cx="2120.9" cy="2040.3" r="2.5"/><circle cx="2130.9" cy="2040.3" r="2.5"/><circle cx="2140.9" cy="2040.3" r="2.5"/><circle cx="2150.9" cy="2040.3" r="2.5"/><circle cx="2160.8" cy="2040.3" r="2.5"/><circle cx="2170.8" cy="2040.3" r="2.5"/><circle cx="2180.8" cy="2040.3" r="2.5"/><circle cx="2011.1" cy="2050.3" r="2.5"/><circle cx="2021.1" cy="2050.3" r="2.5"/><circle cx="2031.0" cy="2050.3" r="2.5"/><circle cx="2041.0" cy="2050.3" r="2.5"/><circle cx="2051.0" cy="2050.3" r="2.5"/><circle cx="2061.0" cy="2050.3" r="2.5"/><circle cx="2071.0" cy="2050.3" r="2.5"/><circle cx="2081.0" cy="2050.3" r="2.5"/><circle cx="2091.0" cy="2050.3" r="2.5"/><circle cx="2100.9" cy="2050.3" r="2.5"/><circle cx="2110.9" cy="2050.3" r="2.5"/><circle cx="2120.9" cy="2050.3" r="2.5"/><circle cx="2130.9" cy="2050.3" r="2.5"/><circle cx="2140.9" cy="2050.3" r="2.5"/><circle cx="2150.9" cy="2050.3" r="2.5"/><circle cx="2160.8" cy="2050.3" r="2.5"/><circle cx="2170.8" cy="2050.3" r="2.5"/><circle cx="2180.8" cy="2050.3" r="2.5"/><circle cx="2190.8" cy="2050.3" r="2.5"/><circle cx="2200.8" cy="2050.3" r="2.5"/><circle cx="2350.5" cy="2050.3" r="2.5"/><circle cx="2360.5" cy="2050.3" r="2.5"/><circle cx="2370.5" cy="2050.3" r="2.5"/><circle cx="2380.5" cy="2050.3" r="2.5"/><circle cx="2390.5" cy="2050.3" r="2.5"/><circle cx="2400.5" cy="2050.3" r="2.5"/><circle cx="2460.4" cy="2050.3" r="2.5"/><circle cx="2470.3" cy="2050.3" r="2.5"/><circle cx="1991.1" cy="2060.3" r="2.5"/><circle cx="2001.1" cy="2060.3" r="2.5"/><circle cx="2011.1" cy="2060.3" r="2.5"/><circle cx="2021.1" cy="2060.3" r="2.5"/><circle cx="2031.0" cy="2060.3" r="2.5"/><circle cx="2041.0" cy="2060.3" r="2.5"/><circle cx="2051.0" cy="2060.3" r="2.5"/><circle cx="2061.0" cy="2060.3" r="2.5"/><circle cx="2071.0" cy="2060.3" r="2.5"/><circle cx="2081.0" cy="2060.3" r="2.5"/><circle cx="2091.0" cy="2060.3" r="2.5"/><circle cx="2100.9" cy="2060.3" r="2.5"/><circle cx="2110.9" cy="2060.3" r="2.5"/><circle cx="2120.9" cy="2060.3" r="2.5"/><circle cx="2130.9" cy="2060.3" r="2.5"/><circle cx="2140.9" cy="2060.3" r="2.5"/><circle cx="2150.9" cy="2060.3" r="2.5"/><circle cx="2160.8" cy="2060.3" r="2.5"/><circle cx="2170.8" cy="2060.3" r="2.5"/><circle cx="2180.8" cy="2060.3" r="2.5"/><circle cx="2190.8" cy="2060.3" r="2.5"/><circle cx="2350.5" cy="2060.3" r="2.5"/><circle cx="2360.5" cy="2060.3" r="2.5"/><circle cx="2370.5" cy="2060.3" r="2.5"/><circle cx="2380.5" cy="2060.3" r="2.5"/><circle cx="2390.5" cy="2060.3" r="2.5"/><circle cx="2400.5" cy="2060.3" r="2.5"/><circle cx="2460.4" cy="2060.3" r="2.5"/><circle cx="2470.3" cy="2060.3" r="2.5"/><circle cx="2480.3" cy="2060.3" r="2.5"/><circle cx="1971.1" cy="2070.3" r="2.5"/><circle cx="1981.1" cy="2070.3" r="2.5"/><circle cx="1991.1" cy="2070.3" r="2.5"/><circle cx="2001.1" cy="2070.3" r="2.5"/><circle cx="2011.1" cy="2070.3" r="2.5"/><circle cx="2021.1" cy="2070.3" r="2.5"/><circle cx="2031.0" cy="2070.3" r="2.5"/><circle cx="2041.0" cy="2070.3" r="2.5"/><circle cx="2051.0" cy="2070.3" r="2.5"/><circle cx="2061.0" cy="2070.3" r="2.5"/><circle cx="2071.0" cy="2070.3" r="2.5"/><circle cx="2081.0" cy="2070.3" r="2.5"/><circle cx="2091.0" cy="2070.3" r="2.5"/><circle cx="2100.9" cy="2070.3" r="2.5"/><circle cx="2110.9" cy="2070.3" r="2.5"/><circle cx="2120.9" cy="2070.3" r="2.5"/><circle cx="2130.9" cy="2070.3" r="2.5"/><circle cx="2140.9" cy="2070.3" r="2.5"/><circle cx="2150.9" cy="2070.3" r="2.5"/><circle cx="2160.8" cy="2070.3" r="2.5"/><circle cx="2170.8" cy="2070.3" r="2.5"/><circle cx="2180.8" cy="2070.3" r="2.5"/><circle cx="2190.8" cy="2070.3" r="2.5"/><circle cx="2460.4" cy="2070.3" r="2.5"/><circle cx="2470.3" cy="2070.3" r="2.5"/><circle cx="2480.3" cy="2070.3" r="2.5"/><circle cx="2490.3" cy="2070.3" r="2.5"/><circle cx="2500.3" cy="2070.3" r="2.5"/><circle cx="1951.2" cy="2080.2" r="2.5"/><circle cx="1961.2" cy="2080.2" r="2.5"/><circle cx="1971.1" cy="2080.2" r="2.5"/><circle cx="1981.1" cy="2080.2" r="2.5"/><circle cx="1991.1" cy="2080.2" r="2.5"/><circle cx="2001.1" cy="2080.2" r="2.5"/><circle cx="2011.1" cy="2080.2" r="2.5"/><circle cx="2021.1" cy="2080.2" r="2.5"/><circle cx="2031.0" cy="2080.2" r="2.5"/><circle cx="2041.0" cy="2080.2" r="2.5"/><circle cx="2051.0" cy="2080.2" r="2.5"/><circle cx="2061.0" cy="2080.2" r="2.5"/><circle cx="2071.0" cy="2080.2" r="2.5"/><circle cx="2081.0" cy="2080.2" r="2.5"/><circle cx="2091.0" cy="2080.2" r="2.5"/><circle cx="2100.9" cy="2080.2" r="2.5"/><circle cx="2110.9" cy="2080.2" r="2.5"/><circle cx="2120.9" cy="2080.2" r="2.5"/><circle cx="2130.9" cy="2080.2" r="2.5"/><circle cx="2140.9" cy="2080.2" r="2.5"/><circle cx="2150.9" cy="2080.2" r="2.5"/><circle cx="2160.8" cy="2080.2" r="2.5"/><circle cx="2170.8" cy="2080.2" r="2.5"/><circle cx="2180.8" cy="2080.2" r="2.5"/><circle cx="2190.8" cy="2080.2" r="2.5"/><circle cx="2400.5" cy="2080.2" r="2.5"/><circle cx="2410.4" cy="2080.2" r="2.5"/><circle cx="2480.3" cy="2080.2" r="2.5"/><circle cx="2490.3" cy="2080.2" r="2.5"/><circle cx="2500.3" cy="2080.2" r="2.5"/><circle cx="1931.2" cy="2090.2" r="2.5"/><circle cx="1941.2" cy="2090.2" r="2.5"/><circle cx="1951.2" cy="2090.2" r="2.5"/><circle cx="1961.2" cy="2090.2" r="2.5"/><circle cx="1971.1" cy="2090.2" r="2.5"/><circle cx="1981.1" cy="2090.2" r="2.5"/><circle cx="1991.1" cy="2090.2" r="2.5"/><circle cx="2001.1" cy="2090.2" r="2.5"/><circle cx="2011.1" cy="2090.2" r="2.5"/><circle cx="2021.1" cy="2090.2" r="2.5"/><circle cx="2031.0" cy="2090.2" r="2.5"/><circle cx="2041.0" cy="2090.2" r="2.5"/><circle cx="2061.0" cy="2090.2" r="2.5"/><circle cx="2071.0" cy="2090.2" r="2.5"/><circle cx="2081.0" cy="2090.2" r="2.5"/><circle cx="2091.0" cy="2090.2" r="2.5"/><circle cx="2100.9" cy="2090.2" r="2.5"/><circle cx="2110.9" cy="2090.2" r="2.5"/><circle cx="2120.9" cy="2090.2" r="2.5"/><circle cx="2130.9" cy="2090.2" r="2.5"/><circle cx="2140.9" cy="2090.2" r="2.5"/><circle cx="2150.9" cy="2090.2" r="2.5"/><circle cx="2160.8" cy="2090.2" r="2.5"/><circle cx="2170.8" cy="2090.2" r="2.5"/><circle cx="2180.8" cy="2090.2" r="2.5"/><circle cx="2190.8" cy="2090.2" r="2.5"/><circle cx="2380.5" cy="2090.2" r="2.5"/><circle cx="2390.5" cy="2090.2" r="2.5"/><circle cx="2400.5" cy="2090.2" r="2.5"/><circle cx="2410.4" cy="2090.2" r="2.5"/><circle cx="2460.4" cy="2090.2" r="2.5"/><circle cx="2470.3" cy="2090.2" r="2.5"/><circle cx="2480.3" cy="2090.2" r="2.5"/><circle cx="2490.3" cy="2090.2" r="2.5"/><circle cx="2500.3" cy="2090.2" r="2.5"/><circle cx="2510.3" cy="2090.2" r="2.5"/><circle cx="2520.3" cy="2090.2" r="2.5"/><circle cx="1931.2" cy="2100.2" r="2.5"/><circle cx="1941.2" cy="2100.2" r="2.5"/><circle cx="1951.2" cy="2100.2" r="2.5"/><circle cx="1961.2" cy="2100.2" r="2.5"/><circle cx="1971.1" cy="2100.2" r="2.5"/><circle cx="1981.1" cy="2100.2" r="2.5"/><circle cx="1991.1" cy="2100.2" r="2.5"/><circle cx="2001.1" cy="2100.2" r="2.5"/><circle cx="2011.1" cy="2100.2" r="2.5"/><circle cx="2021.1" cy="2100.2" r="2.5"/><circle cx="2031.0" cy="2100.2" r="2.5"/><circle cx="2091.0" cy="2100.2" r="2.5"/><circle cx="2100.9" cy="2100.2" r="2.5"/><circle cx="2110.9" cy="2100.2" r="2.5"/><circle cx="2120.9" cy="2100.2" r="2.5"/><circle cx="2130.9" cy="2100.2" r="2.5"/><circle cx="2140.9" cy="2100.2" r="2.5"/><circle cx="2150.9" cy="2100.2" r="2.5"/><circle cx="2160.8" cy="2100.2" r="2.5"/><circle cx="2170.8" cy="2100.2" r="2.5"/><circle cx="2180.8" cy="2100.2" r="2.5"/><circle cx="2190.8" cy="2100.2" r="2.5"/><circle cx="2370.5" cy="2100.2" r="2.5"/><circle cx="2380.5" cy="2100.2" r="2.5"/><circle cx="2390.5" cy="2100.2" r="2.5"/><circle cx="2450.4" cy="2100.2" r="2.5"/><circle cx="2460.4" cy="2100.2" r="2.5"/><circle cx="2470.3" cy="2100.2" r="2.5"/><circle cx="2480.3" cy="2100.2" r="2.5"/><circle cx="2490.3" cy="2100.2" r="2.5"/><circle cx="2500.3" cy="2100.2" r="2.5"/><circle cx="2510.3" cy="2100.2" r="2.5"/><circle cx="2520.3" cy="2100.2" r="2.5"/><circle cx="2580.2" cy="2100.2" r="2.5"/><circle cx="2590.2" cy="2100.2" r="2.5"/><circle cx="2600.1" cy="2100.2" r="2.5"/><circle cx="1921.2" cy="2110.2" r="2.5"/><circle cx="1931.2" cy="2110.2" r="2.5"/><circle cx="1941.2" cy="2110.2" r="2.5"/><circle cx="1951.2" cy="2110.2" r="2.5"/><circle cx="1961.2" cy="2110.2" r="2.5"/><circle cx="1971.1" cy="2110.2" r="2.5"/><circle cx="1981.1" cy="2110.2" r="2.5"/><circle cx="1991.1" cy="2110.2" r="2.5"/><circle cx="2001.1" cy="2110.2" r="2.5"/><circle cx="2011.1" cy="2110.2" r="2.5"/><circle cx="2021.1" cy="2110.2" r="2.5"/><circle cx="2031.0" cy="2110.2" r="2.5"/><circle cx="2041.0" cy="2110.2" r="2.5"/><circle cx="2091.0" cy="2110.2" r="2.5"/><circle cx="2100.9" cy="2110.2" r="2.5"/><circle cx="2110.9" cy="2110.2" r="2.5"/><circle cx="2120.9" cy="2110.2" r="2.5"/><circle cx="2130.9" cy="2110.2" r="2.5"/><circle cx="2140.9" cy="2110.2" r="2.5"/><circle cx="2150.9" cy="2110.2" r="2.5"/><circle cx="2160.8" cy="2110.2" r="2.5"/><circle cx="2170.8" cy="2110.2" r="2.5"/><circle cx="2180.8" cy="2110.2" r="2.5"/><circle cx="2370.5" cy="2110.2" r="2.5"/><circle cx="2380.5" cy="2110.2" r="2.5"/><circle cx="2410.4" cy="2110.2" r="2.5"/><circle cx="2420.4" cy="2110.2" r="2.5"/><circle cx="2440.4" cy="2110.2" r="2.5"/><circle cx="2450.4" cy="2110.2" r="2.5"/><circle cx="2460.4" cy="2110.2" r="2.5"/><circle cx="2470.3" cy="2110.2" r="2.5"/><circle cx="2480.3" cy="2110.2" r="2.5"/><circle cx="2490.3" cy="2110.2" r="2.5"/><circle cx="2500.3" cy="2110.2" r="2.5"/><circle cx="2510.3" cy="2110.2" r="2.5"/><circle cx="2520.3" cy="2110.2" r="2.5"/><circle cx="2530.2" cy="2110.2" r="2.5"/><circle cx="2540.2" cy="2110.2" r="2.5"/><circle cx="2550.2" cy="2110.2" r="2.5"/><circle cx="2560.2" cy="2110.2" r="2.5"/><circle cx="2580.2" cy="2110.2" r="2.5"/><circle cx="2590.2" cy="2110.2" r="2.5"/><circle cx="2600.1" cy="2110.2" r="2.5"/><circle cx="2610.1" cy="2110.2" r="2.5"/><circle cx="1921.2" cy="2120.2" r="2.5"/><circle cx="1931.2" cy="2120.2" r="2.5"/><circle cx="1941.2" cy="2120.2" r="2.5"/><circle cx="1951.2" cy="2120.2" r="2.5"/><circle cx="1961.2" cy="2120.2" r="2.5"/><circle cx="1971.1" cy="2120.2" r="2.5"/><circle cx="1981.1" cy="2120.2" r="2.5"/><circle cx="1991.1" cy="2120.2" r="2.5"/><circle cx="2001.1" cy="2120.2" r="2.5"/><circle cx="2011.1" cy="2120.2" r="2.5"/><circle cx="2021.1" cy="2120.2" r="2.5"/><circle cx="2031.0" cy="2120.2" r="2.5"/><circle cx="2041.0" cy="2120.2" r="2.5"/><circle cx="2051.0" cy="2120.2" r="2.5"/><circle cx="2061.0" cy="2120.2" r="2.5"/><circle cx="2100.9" cy="2120.2" r="2.5"/><circle cx="2110.9" cy="2120.2" r="2.5"/><circle cx="2120.9" cy="2120.2" r="2.5"/><circle cx="2130.9" cy="2120.2" r="2.5"/><circle cx="2140.9" cy="2120.2" r="2.5"/><circle cx="2150.9" cy="2120.2" r="2.5"/><circle cx="2160.8" cy="2120.2" r="2.5"/><circle cx="2170.8" cy="2120.2" r="2.5"/><circle cx="2180.8" cy="2120.2" r="2.5"/><circle cx="2290.6" cy="2120.2" r="2.5"/><circle cx="2300.6" cy="2120.2" r="2.5"/><circle cx="2310.6" cy="2120.2" r="2.5"/><circle cx="2360.5" cy="2120.2" r="2.5"/><circle cx="2370.5" cy="2120.2" r="2.5"/><circle cx="2380.5" cy="2120.2" r="2.5"/><circle cx="2400.5" cy="2120.2" r="2.5"/><circle cx="2410.4" cy="2120.2" r="2.5"/><circle cx="2420.4" cy="2120.2" r="2.5"/><circle cx="2430.4" cy="2120.2" r="2.5"/><circle cx="2440.4" cy="2120.2" r="2.5"/><circle cx="2450.4" cy="2120.2" r="2.5"/><circle cx="2460.4" cy="2120.2" r="2.5"/><circle cx="2470.3" cy="2120.2" r="2.5"/><circle cx="2480.3" cy="2120.2" r="2.5"/><circle cx="2490.3" cy="2120.2" r="2.5"/><circle cx="2500.3" cy="2120.2" r="2.5"/><circle cx="2510.3" cy="2120.2" r="2.5"/><circle cx="2520.3" cy="2120.2" r="2.5"/><circle cx="2530.2" cy="2120.2" r="2.5"/><circle cx="2540.2" cy="2120.2" r="2.5"/><circle cx="2550.2" cy="2120.2" r="2.5"/><circle cx="2560.2" cy="2120.2" r="2.5"/><circle cx="2590.2" cy="2120.2" r="2.5"/><circle cx="2600.1" cy="2120.2" r="2.5"/><circle cx="1921.2" cy="2130.2" r="2.5"/><circle cx="1931.2" cy="2130.2" r="2.5"/><circle cx="1941.2" cy="2130.2" r="2.5"/><circle cx="1951.2" cy="2130.2" r="2.5"/><circle cx="1961.2" cy="2130.2" r="2.5"/><circle cx="1971.1" cy="2130.2" r="2.5"/><circle cx="1981.1" cy="2130.2" r="2.5"/><circle cx="1991.1" cy="2130.2" r="2.5"/><circle cx="2001.1" cy="2130.2" r="2.5"/><circle cx="2011.1" cy="2130.2" r="2.5"/><circle cx="2021.1" cy="2130.2" r="2.5"/><circle cx="2031.0" cy="2130.2" r="2.5"/><circle cx="2041.0" cy="2130.2" r="2.5"/><circle cx="2051.0" cy="2130.2" r="2.5"/><circle cx="2061.0" cy="2130.2" r="2.5"/><circle cx="2071.0" cy="2130.2" r="2.5"/><circle cx="2100.9" cy="2130.2" r="2.5"/><circle cx="2110.9" cy="2130.2" r="2.5"/><circle cx="2120.9" cy="2130.2" r="2.5"/><circle cx="2130.9" cy="2130.2" r="2.5"/><circle cx="2140.9" cy="2130.2" r="2.5"/><circle cx="2150.9" cy="2130.2" r="2.5"/><circle cx="2160.8" cy="2130.2" r="2.5"/><circle cx="2170.8" cy="2130.2" r="2.5"/><circle cx="2180.8" cy="2130.2" r="2.5"/><circle cx="2270.7" cy="2130.2" r="2.5"/><circle cx="2280.6" cy="2130.2" r="2.5"/><circle cx="2290.6" cy="2130.2" r="2.5"/><circle cx="2300.6" cy="2130.2" r="2.5"/><circle cx="2310.6" cy="2130.2" r="2.5"/><circle cx="2320.6" cy="2130.2" r="2.5"/><circle cx="2330.6" cy="2130.2" r="2.5"/><circle cx="2360.5" cy="2130.2" r="2.5"/><circle cx="2370.5" cy="2130.2" r="2.5"/><circle cx="2380.5" cy="2130.2" r="2.5"/><circle cx="2390.5" cy="2130.2" r="2.5"/><circle cx="2400.5" cy="2130.2" r="2.5"/><circle cx="2410.4" cy="2130.2" r="2.5"/><circle cx="2420.4" cy="2130.2" r="2.5"/><circle cx="2430.4" cy="2130.2" r="2.5"/><circle cx="2440.4" cy="2130.2" r="2.5"/><circle cx="2450.4" cy="2130.2" r="2.5"/><circle cx="2460.4" cy="2130.2" r="2.5"/><circle cx="2470.3" cy="2130.2" r="2.5"/><circle cx="2480.3" cy="2130.2" r="2.5"/><circle cx="2490.3" cy="2130.2" r="2.5"/><circle cx="2500.3" cy="2130.2" r="2.5"/><circle cx="2510.3" cy="2130.2" r="2.5"/><circle cx="2520.3" cy="2130.2" r="2.5"/><circle cx="2530.2" cy="2130.2" r="2.5"/><circle cx="2540.2" cy="2130.2" r="2.5"/><circle cx="2550.2" cy="2130.2" r="2.5"/><circle cx="2560.2" cy="2130.2" r="2.5"/><circle cx="2570.2" cy="2130.2" r="2.5"/><circle cx="2580.2" cy="2130.2" r="2.5"/><circle cx="2590.2" cy="2130.2" r="2.5"/><circle cx="2600.1" cy="2130.2" r="2.5"/><circle cx="2610.1" cy="2130.2" r="2.5"/><circle cx="2620.1" cy="2130.2" r="2.5"/><circle cx="2630.1" cy="2130.2" r="2.5"/><circle cx="1831.4" cy="2140.2" r="2.5"/><circle cx="1841.4" cy="2140.2" r="2.5"/><circle cx="1851.3" cy="2140.2" r="2.5"/><circle cx="1861.3" cy="2140.2" r="2.5"/><circle cx="1871.3" cy="2140.2" r="2.5"/><circle cx="1881.3" cy="2140.2" r="2.5"/><circle cx="1891.3" cy="2140.2" r="2.5"/><circle cx="1901.3" cy="2140.2" r="2.5"/><circle cx="1911.2" cy="2140.2" r="2.5"/><circle cx="1921.2" cy="2140.2" r="2.5"/><circle cx="1931.2" cy="2140.2" r="2.5"/><circle cx="1941.2" cy="2140.2" r="2.5"/><circle cx="1951.2" cy="2140.2" r="2.5"/><circle cx="1961.2" cy="2140.2" r="2.5"/><circle cx="1971.1" cy="2140.2" r="2.5"/><circle cx="1981.1" cy="2140.2" r="2.5"/><circle cx="1991.1" cy="2140.2" r="2.5"/><circle cx="2001.1" cy="2140.2" r="2.5"/><circle cx="2011.1" cy="2140.2" r="2.5"/><circle cx="2021.1" cy="2140.2" r="2.5"/><circle cx="2031.0" cy="2140.2" r="2.5"/><circle cx="2041.0" cy="2140.2" r="2.5"/><circle cx="2051.0" cy="2140.2" r="2.5"/><circle cx="2061.0" cy="2140.2" r="2.5"/><circle cx="2071.0" cy="2140.2" r="2.5"/><circle cx="2081.0" cy="2140.2" r="2.5"/><circle cx="2100.9" cy="2140.2" r="2.5"/><circle cx="2110.9" cy="2140.2" r="2.5"/><circle cx="2120.9" cy="2140.2" r="2.5"/><circle cx="2130.9" cy="2140.2" r="2.5"/><circle cx="2140.9" cy="2140.2" r="2.5"/><circle cx="2150.9" cy="2140.2" r="2.5"/><circle cx="2160.8" cy="2140.2" r="2.5"/><circle cx="2190.8" cy="2140.2" r="2.5"/><circle cx="2200.8" cy="2140.2" r="2.5"/><circle cx="2270.7" cy="2140.2" r="2.5"/><circle cx="2280.6" cy="2140.2" r="2.5"/><circle cx="2290.6" cy="2140.2" r="2.5"/><circle cx="2300.6" cy="2140.2" r="2.5"/><circle cx="2310.6" cy="2140.2" r="2.5"/><circle cx="2320.6" cy="2140.2" r="2.5"/><circle cx="2330.6" cy="2140.2" r="2.5"/><circle cx="2340.6" cy="2140.2" r="2.5"/><circle cx="2350.5" cy="2140.2" r="2.5"/><circle cx="2360.5" cy="2140.2" r="2.5"/><circle cx="2370.5" cy="2140.2" r="2.5"/><circle cx="2380.5" cy="2140.2" r="2.5"/><circle cx="2390.5" cy="2140.2" r="2.5"/><circle cx="2400.5" cy="2140.2" r="2.5"/><circle cx="2410.4" cy="2140.2" r="2.5"/><circle cx="2420.4" cy="2140.2" r="2.5"/><circle cx="2430.4" cy="2140.2" r="2.5"/><circle cx="2440.4" cy="2140.2" r="2.5"/><circle cx="2450.4" cy="2140.2" r="2.5"/><circle cx="2460.4" cy="2140.2" r="2.5"/><circle cx="2470.3" cy="2140.2" r="2.5"/><circle cx="2480.3" cy="2140.2" r="2.5"/><circle cx="2490.3" cy="2140.2" r="2.5"/><circle cx="2500.3" cy="2140.2" r="2.5"/><circle cx="2510.3" cy="2140.2" r="2.5"/><circle cx="2520.3" cy="2140.2" r="2.5"/><circle cx="2530.2" cy="2140.2" r="2.5"/><circle cx="2540.2" cy="2140.2" r="2.5"/><circle cx="2550.2" cy="2140.2" r="2.5"/><circle cx="2560.2" cy="2140.2" r="2.5"/><circle cx="2570.2" cy="2140.2" r="2.5"/><circle cx="2580.2" cy="2140.2" r="2.5"/><circle cx="2590.2" cy="2140.2" r="2.5"/><circle cx="2600.1" cy="2140.2" r="2.5"/><circle cx="2610.1" cy="2140.2" r="2.5"/><circle cx="2620.1" cy="2140.2" r="2.5"/><circle cx="2630.1" cy="2140.2" r="2.5"/><circle cx="2640.1" cy="2140.2" r="2.5"/><circle cx="2650.1" cy="2140.2" r="2.5"/><circle cx="2660.0" cy="2140.2" r="2.5"/><circle cx="2670.0" cy="2140.2" r="2.5"/><circle cx="2680.0" cy="2140.2" r="2.5"/><circle cx="2690.0" cy="2140.2" r="2.5"/><circle cx="1811.4" cy="2150.2" r="2.5"/><circle cx="1821.4" cy="2150.2" r="2.5"/><circle cx="1831.4" cy="2150.2" r="2.5"/><circle cx="1841.4" cy="2150.2" r="2.5"/><circle cx="1851.3" cy="2150.2" r="2.5"/><circle cx="1861.3" cy="2150.2" r="2.5"/><circle cx="1871.3" cy="2150.2" r="2.5"/><circle cx="1881.3" cy="2150.2" r="2.5"/><circle cx="1891.3" cy="2150.2" r="2.5"/><circle cx="1901.3" cy="2150.2" r="2.5"/><circle cx="1911.2" cy="2150.2" r="2.5"/><circle cx="1921.2" cy="2150.2" r="2.5"/><circle cx="1931.2" cy="2150.2" r="2.5"/><circle cx="1941.2" cy="2150.2" r="2.5"/><circle cx="1951.2" cy="2150.2" r="2.5"/><circle cx="1961.2" cy="2150.2" r="2.5"/><circle cx="1971.1" cy="2150.2" r="2.5"/><circle cx="1981.1" cy="2150.2" r="2.5"/><circle cx="1991.1" cy="2150.2" r="2.5"/><circle cx="2001.1" cy="2150.2" r="2.5"/><circle cx="2011.1" cy="2150.2" r="2.5"/><circle cx="2021.1" cy="2150.2" r="2.5"/><circle cx="2031.0" cy="2150.2" r="2.5"/><circle cx="2041.0" cy="2150.2" r="2.5"/><circle cx="2051.0" cy="2150.2" r="2.5"/><circle cx="2061.0" cy="2150.2" r="2.5"/><circle cx="2071.0" cy="2150.2" r="2.5"/><circle cx="2081.0" cy="2150.2" r="2.5"/><circle cx="2100.9" cy="2150.2" r="2.5"/><circle cx="2110.9" cy="2150.2" r="2.5"/><circle cx="2120.9" cy="2150.2" r="2.5"/><circle cx="2130.9" cy="2150.2" r="2.5"/><circle cx="2140.9" cy="2150.2" r="2.5"/><circle cx="2150.9" cy="2150.2" r="2.5"/><circle cx="2170.8" cy="2150.2" r="2.5"/><circle cx="2180.8" cy="2150.2" r="2.5"/><circle cx="2190.8" cy="2150.2" r="2.5"/><circle cx="2200.8" cy="2150.2" r="2.5"/><circle cx="2260.7" cy="2150.2" r="2.5"/><circle cx="2270.7" cy="2150.2" r="2.5"/><circle cx="2280.6" cy="2150.2" r="2.5"/><circle cx="2290.6" cy="2150.2" r="2.5"/><circle cx="2300.6" cy="2150.2" r="2.5"/><circle cx="2310.6" cy="2150.2" r="2.5"/><circle cx="2320.6" cy="2150.2" r="2.5"/><circle cx="2330.6" cy="2150.2" r="2.5"/><circle cx="2340.6" cy="2150.2" r="2.5"/><circle cx="2350.5" cy="2150.2" r="2.5"/><circle cx="2360.5" cy="2150.2" r="2.5"/><circle cx="2370.5" cy="2150.2" r="2.5"/><circle cx="2380.5" cy="2150.2" r="2.5"/><circle cx="2390.5" cy="2150.2" r="2.5"/><circle cx="2400.5" cy="2150.2" r="2.5"/><circle cx="2410.4" cy="2150.2" r="2.5"/><circle cx="2420.4" cy="2150.2" r="2.5"/><circle cx="2430.4" cy="2150.2" r="2.5"/><circle cx="2440.4" cy="2150.2" r="2.5"/><circle cx="2450.4" cy="2150.2" r="2.5"/><circle cx="2460.4" cy="2150.2" r="2.5"/><circle cx="2470.3" cy="2150.2" r="2.5"/><circle cx="2480.3" cy="2150.2" r="2.5"/><circle cx="2490.3" cy="2150.2" r="2.5"/><circle cx="2500.3" cy="2150.2" r="2.5"/><circle cx="2510.3" cy="2150.2" r="2.5"/><circle cx="2520.3" cy="2150.2" r="2.5"/><circle cx="2530.2" cy="2150.2" r="2.5"/><circle cx="2540.2" cy="2150.2" r="2.5"/><circle cx="2550.2" cy="2150.2" r="2.5"/><circle cx="2560.2" cy="2150.2" r="2.5"/><circle cx="2570.2" cy="2150.2" r="2.5"/><circle cx="2580.2" cy="2150.2" r="2.5"/><circle cx="2590.2" cy="2150.2" r="2.5"/><circle cx="2600.1" cy="2150.2" r="2.5"/><circle cx="2610.1" cy="2150.2" r="2.5"/><circle cx="2620.1" cy="2150.2" r="2.5"/><circle cx="2630.1" cy="2150.2" r="2.5"/><circle cx="2640.1" cy="2150.2" r="2.5"/><circle cx="2650.1" cy="2150.2" r="2.5"/><circle cx="2660.0" cy="2150.2" r="2.5"/><circle cx="2670.0" cy="2150.2" r="2.5"/><circle cx="2680.0" cy="2150.2" r="2.5"/><circle cx="2690.0" cy="2150.2" r="2.5"/><circle cx="1811.4" cy="2160.2" r="2.5"/><circle cx="1821.4" cy="2160.2" r="2.5"/><circle cx="1831.4" cy="2160.2" r="2.5"/><circle cx="1841.4" cy="2160.2" r="2.5"/><circle cx="1851.3" cy="2160.2" r="2.5"/><circle cx="1861.3" cy="2160.2" r="2.5"/><circle cx="1871.3" cy="2160.2" r="2.5"/><circle cx="1881.3" cy="2160.2" r="2.5"/><circle cx="1891.3" cy="2160.2" r="2.5"/><circle cx="1901.3" cy="2160.2" r="2.5"/><circle cx="1911.2" cy="2160.2" r="2.5"/><circle cx="1921.2" cy="2160.2" r="2.5"/><circle cx="1931.2" cy="2160.2" r="2.5"/><circle cx="1941.2" cy="2160.2" r="2.5"/><circle cx="1951.2" cy="2160.2" r="2.5"/><circle cx="1961.2" cy="2160.2" r="2.5"/><circle cx="1971.1" cy="2160.2" r="2.5"/><circle cx="1981.1" cy="2160.2" r="2.5"/><circle cx="1991.1" cy="2160.2" r="2.5"/><circle cx="2001.1" cy="2160.2" r="2.5"/><circle cx="2011.1" cy="2160.2" r="2.5"/><circle cx="2021.1" cy="2160.2" r="2.5"/><circle cx="2031.0" cy="2160.2" r="2.5"/><circle cx="2041.0" cy="2160.2" r="2.5"/><circle cx="2051.0" cy="2160.2" r="2.5"/><circle cx="2061.0" cy="2160.2" r="2.5"/><circle cx="2071.0" cy="2160.2" r="2.5"/><circle cx="2100.9" cy="2160.2" r="2.5"/><circle cx="2110.9" cy="2160.2" r="2.5"/><circle cx="2120.9" cy="2160.2" r="2.5"/><circle cx="2130.9" cy="2160.2" r="2.5"/><circle cx="2170.8" cy="2160.2" r="2.5"/><circle cx="2180.8" cy="2160.2" r="2.5"/><circle cx="2190.8" cy="2160.2" r="2.5"/><circle cx="2200.8" cy="2160.2" r="2.5"/><circle cx="2250.7" cy="2160.2" r="2.5"/><circle cx="2260.7" cy="2160.2" r="2.5"/><circle cx="2270.7" cy="2160.2" r="2.5"/><circle cx="2280.6" cy="2160.2" r="2.5"/><circle cx="2290.6" cy="2160.2" r="2.5"/><circle cx="2300.6" cy="2160.2" r="2.5"/><circle cx="2310.6" cy="2160.2" r="2.5"/><circle cx="2320.6" cy="2160.2" r="2.5"/><circle cx="2330.6" cy="2160.2" r="2.5"/><circle cx="2340.6" cy="2160.2" r="2.5"/><circle cx="2350.5" cy="2160.2" r="2.5"/><circle cx="2360.5" cy="2160.2" r="2.5"/><circle cx="2370.5" cy="2160.2" r="2.5"/><circle cx="2380.5" cy="2160.2" r="2.5"/><circle cx="2390.5" cy="2160.2" r="2.5"/><circle cx="2400.5" cy="2160.2" r="2.5"/><circle cx="2410.4" cy="2160.2" r="2.5"/><circle cx="2420.4" cy="2160.2" r="2.5"/><circle cx="2430.4" cy="2160.2" r="2.5"/><circle cx="2440.4" cy="2160.2" r="2.5"/><circle cx="2450.4" cy="2160.2" r="2.5"/><circle cx="2460.4" cy="2160.2" r="2.5"/><circle cx="2470.3" cy="2160.2" r="2.5"/><circle cx="2480.3" cy="2160.2" r="2.5"/><circle cx="2490.3" cy="2160.2" r="2.5"/><circle cx="2500.3" cy="2160.2" r="2.5"/><circle cx="2510.3" cy="2160.2" r="2.5"/><circle cx="2520.3" cy="2160.2" r="2.5"/><circle cx="2530.2" cy="2160.2" r="2.5"/><circle cx="2540.2" cy="2160.2" r="2.5"/><circle cx="2550.2" cy="2160.2" r="2.5"/><circle cx="2560.2" cy="2160.2" r="2.5"/><circle cx="2570.2" cy="2160.2" r="2.5"/><circle cx="2580.2" cy="2160.2" r="2.5"/><circle cx="2590.2" cy="2160.2" r="2.5"/><circle cx="2600.1" cy="2160.2" r="2.5"/><circle cx="2610.1" cy="2160.2" r="2.5"/><circle cx="2620.1" cy="2160.2" r="2.5"/><circle cx="2630.1" cy="2160.2" r="2.5"/><circle cx="2640.1" cy="2160.2" r="2.5"/><circle cx="2650.1" cy="2160.2" r="2.5"/><circle cx="2660.0" cy="2160.2" r="2.5"/><circle cx="2670.0" cy="2160.2" r="2.5"/><circle cx="2680.0" cy="2160.2" r="2.5"/><circle cx="2690.0" cy="2160.2" r="2.5"/><circle cx="2700.0" cy="2160.2" r="2.5"/><circle cx="2710.0" cy="2160.2" r="2.5"/><circle cx="1811.4" cy="2170.2" r="2.5"/><circle cx="1821.4" cy="2170.2" r="2.5"/><circle cx="1831.4" cy="2170.2" r="2.5"/><circle cx="1841.4" cy="2170.2" r="2.5"/><circle cx="1851.3" cy="2170.2" r="2.5"/><circle cx="1861.3" cy="2170.2" r="2.5"/><circle cx="1871.3" cy="2170.2" r="2.5"/><circle cx="1881.3" cy="2170.2" r="2.5"/><circle cx="1891.3" cy="2170.2" r="2.5"/><circle cx="1901.3" cy="2170.2" r="2.5"/><circle cx="1911.2" cy="2170.2" r="2.5"/><circle cx="1921.2" cy="2170.2" r="2.5"/><circle cx="1931.2" cy="2170.2" r="2.5"/><circle cx="1941.2" cy="2170.2" r="2.5"/><circle cx="1951.2" cy="2170.2" r="2.5"/><circle cx="1961.2" cy="2170.2" r="2.5"/><circle cx="1971.1" cy="2170.2" r="2.5"/><circle cx="1981.1" cy="2170.2" r="2.5"/><circle cx="1991.1" cy="2170.2" r="2.5"/><circle cx="2001.1" cy="2170.2" r="2.5"/><circle cx="2011.1" cy="2170.2" r="2.5"/><circle cx="2021.1" cy="2170.2" r="2.5"/><circle cx="2031.0" cy="2170.2" r="2.5"/><circle cx="2041.0" cy="2170.2" r="2.5"/><circle cx="2051.0" cy="2170.2" r="2.5"/><circle cx="2061.0" cy="2170.2" r="2.5"/><circle cx="2071.0" cy="2170.2" r="2.5"/><circle cx="2110.9" cy="2170.2" r="2.5"/><circle cx="2120.9" cy="2170.2" r="2.5"/><circle cx="2130.9" cy="2170.2" r="2.5"/><circle cx="2250.7" cy="2170.2" r="2.5"/><circle cx="2260.7" cy="2170.2" r="2.5"/><circle cx="2270.7" cy="2170.2" r="2.5"/><circle cx="2280.6" cy="2170.2" r="2.5"/><circle cx="2290.6" cy="2170.2" r="2.5"/><circle cx="2300.6" cy="2170.2" r="2.5"/><circle cx="2310.6" cy="2170.2" r="2.5"/><circle cx="2320.6" cy="2170.2" r="2.5"/><circle cx="2330.6" cy="2170.2" r="2.5"/><circle cx="2340.6" cy="2170.2" r="2.5"/><circle cx="2350.5" cy="2170.2" r="2.5"/><circle cx="2360.5" cy="2170.2" r="2.5"/><circle cx="2370.5" cy="2170.2" r="2.5"/><circle cx="2380.5" cy="2170.2" r="2.5"/><circle cx="2390.5" cy="2170.2" r="2.5"/><circle cx="2400.5" cy="2170.2" r="2.5"/><circle cx="2410.4" cy="2170.2" r="2.5"/><circle cx="2420.4" cy="2170.2" r="2.5"/><circle cx="2430.4" cy="2170.2" r="2.5"/><circle cx="2440.4" cy="2170.2" r="2.5"/><circle cx="2450.4" cy="2170.2" r="2.5"/><circle cx="2460.4" cy="2170.2" r="2.5"/><circle cx="2470.3" cy="2170.2" r="2.5"/><circle cx="2480.3" cy="2170.2" r="2.5"/><circle cx="2490.3" cy="2170.2" r="2.5"/><circle cx="2500.3" cy="2170.2" r="2.5"/><circle cx="2510.3" cy="2170.2" r="2.5"/><circle cx="2520.3" cy="2170.2" r="2.5"/><circle cx="2530.2" cy="2170.2" r="2.5"/><circle cx="2540.2" cy="2170.2" r="2.5"/><circle cx="2550.2" cy="2170.2" r="2.5"/><circle cx="2560.2" cy="2170.2" r="2.5"/><circle cx="2570.2" cy="2170.2" r="2.5"/><circle cx="2580.2" cy="2170.2" r="2.5"/><circle cx="2590.2" cy="2170.2" r="2.5"/><circle cx="2600.1" cy="2170.2" r="2.5"/><circle cx="2610.1" cy="2170.2" r="2.5"/><circle cx="2620.1" cy="2170.2" r="2.5"/><circle cx="2630.1" cy="2170.2" r="2.5"/><circle cx="2640.1" cy="2170.2" r="2.5"/><circle cx="2650.1" cy="2170.2" r="2.5"/><circle cx="2660.0" cy="2170.2" r="2.5"/><circle cx="2670.0" cy="2170.2" r="2.5"/><circle cx="2680.0" cy="2170.2" r="2.5"/><circle cx="2690.0" cy="2170.2" r="2.5"/><circle cx="2700.0" cy="2170.2" r="2.5"/><circle cx="2710.0" cy="2170.2" r="2.5"/><circle cx="1811.4" cy="2180.2" r="2.5"/><circle cx="1821.4" cy="2180.2" r="2.5"/><circle cx="1831.4" cy="2180.2" r="2.5"/><circle cx="1841.4" cy="2180.2" r="2.5"/><circle cx="1851.3" cy="2180.2" r="2.5"/><circle cx="1861.3" cy="2180.2" r="2.5"/><circle cx="1871.3" cy="2180.2" r="2.5"/><circle cx="1881.3" cy="2180.2" r="2.5"/><circle cx="1891.3" cy="2180.2" r="2.5"/><circle cx="1901.3" cy="2180.2" r="2.5"/><circle cx="1911.2" cy="2180.2" r="2.5"/><circle cx="1921.2" cy="2180.2" r="2.5"/><circle cx="1931.2" cy="2180.2" r="2.5"/><circle cx="1941.2" cy="2180.2" r="2.5"/><circle cx="1951.2" cy="2180.2" r="2.5"/><circle cx="1961.2" cy="2180.2" r="2.5"/><circle cx="1971.1" cy="2180.2" r="2.5"/><circle cx="1981.1" cy="2180.2" r="2.5"/><circle cx="1991.1" cy="2180.2" r="2.5"/><circle cx="2001.1" cy="2180.2" r="2.5"/><circle cx="2041.0" cy="2180.2" r="2.5"/><circle cx="2051.0" cy="2180.2" r="2.5"/><circle cx="2061.0" cy="2180.2" r="2.5"/><circle cx="2071.0" cy="2180.2" r="2.5"/><circle cx="2081.0" cy="2180.2" r="2.5"/><circle cx="2220.7" cy="2180.2" r="2.5"/><circle cx="2230.7" cy="2180.2" r="2.5"/><circle cx="2250.7" cy="2180.2" r="2.5"/><circle cx="2260.7" cy="2180.2" r="2.5"/><circle cx="2270.7" cy="2180.2" r="2.5"/><circle cx="2280.6" cy="2180.2" r="2.5"/><circle cx="2290.6" cy="2180.2" r="2.5"/><circle cx="2300.6" cy="2180.2" r="2.5"/><circle cx="2310.6" cy="2180.2" r="2.5"/><circle cx="2320.6" cy="2180.2" r="2.5"/><circle cx="2330.6" cy="2180.2" r="2.5"/><circle cx="2340.6" cy="2180.2" r="2.5"/><circle cx="2350.5" cy="2180.2" r="2.5"/><circle cx="2360.5" cy="2180.2" r="2.5"/><circle cx="2370.5" cy="2180.2" r="2.5"/><circle cx="2380.5" cy="2180.2" r="2.5"/><circle cx="2390.5" cy="2180.2" r="2.5"/><circle cx="2400.5" cy="2180.2" r="2.5"/><circle cx="2410.4" cy="2180.2" r="2.5"/><circle cx="2420.4" cy="2180.2" r="2.5"/><circle cx="2430.4" cy="2180.2" r="2.5"/><circle cx="2440.4" cy="2180.2" r="2.5"/><circle cx="2450.4" cy="2180.2" r="2.5"/><circle cx="2460.4" cy="2180.2" r="2.5"/><circle cx="2470.3" cy="2180.2" r="2.5"/><circle cx="2480.3" cy="2180.2" r="2.5"/><circle cx="2490.3" cy="2180.2" r="2.5"/><circle cx="2500.3" cy="2180.2" r="2.5"/><circle cx="2510.3" cy="2180.2" r="2.5"/><circle cx="2520.3" cy="2180.2" r="2.5"/><circle cx="2530.2" cy="2180.2" r="2.5"/><circle cx="2540.2" cy="2180.2" r="2.5"/><circle cx="2550.2" cy="2180.2" r="2.5"/><circle cx="2560.2" cy="2180.2" r="2.5"/><circle cx="2570.2" cy="2180.2" r="2.5"/><circle cx="2580.2" cy="2180.2" r="2.5"/><circle cx="2590.2" cy="2180.2" r="2.5"/><circle cx="2600.1" cy="2180.2" r="2.5"/><circle cx="2610.1" cy="2180.2" r="2.5"/><circle cx="2620.1" cy="2180.2" r="2.5"/><circle cx="2630.1" cy="2180.2" r="2.5"/><circle cx="2640.1" cy="2180.2" r="2.5"/><circle cx="2650.1" cy="2180.2" r="2.5"/><circle cx="2660.0" cy="2180.2" r="2.5"/><circle cx="2670.0" cy="2180.2" r="2.5"/><circle cx="2680.0" cy="2180.2" r="2.5"/><circle cx="2710.0" cy="2180.2" r="2.5"/><circle cx="1811.4" cy="2190.1" r="2.5"/><circle cx="1821.4" cy="2190.1" r="2.5"/><circle cx="1831.4" cy="2190.1" r="2.5"/><circle cx="1841.4" cy="2190.1" r="2.5"/><circle cx="1851.3" cy="2190.1" r="2.5"/><circle cx="1861.3" cy="2190.1" r="2.5"/><circle cx="1881.3" cy="2190.1" r="2.5"/><circle cx="1891.3" cy="2190.1" r="2.5"/><circle cx="1901.3" cy="2190.1" r="2.5"/><circle cx="1911.2" cy="2190.1" r="2.5"/><circle cx="1921.2" cy="2190.1" r="2.5"/><circle cx="1931.2" cy="2190.1" r="2.5"/><circle cx="1941.2" cy="2190.1" r="2.5"/><circle cx="1951.2" cy="2190.1" r="2.5"/><circle cx="1961.2" cy="2190.1" r="2.5"/><circle cx="1971.1" cy="2190.1" r="2.5"/><circle cx="1981.1" cy="2190.1" r="2.5"/><circle cx="1991.1" cy="2190.1" r="2.5"/><circle cx="2001.1" cy="2190.1" r="2.5"/><circle cx="2011.1" cy="2190.1" r="2.5"/><circle cx="2021.1" cy="2190.1" r="2.5"/><circle cx="2041.0" cy="2190.1" r="2.5"/><circle cx="2051.0" cy="2190.1" r="2.5"/><circle cx="2061.0" cy="2190.1" r="2.5"/><circle cx="2071.0" cy="2190.1" r="2.5"/><circle cx="2081.0" cy="2190.1" r="2.5"/><circle cx="2210.8" cy="2190.1" r="2.5"/><circle cx="2220.7" cy="2190.1" r="2.5"/><circle cx="2230.7" cy="2190.1" r="2.5"/><circle cx="2250.7" cy="2190.1" r="2.5"/><circle cx="2260.7" cy="2190.1" r="2.5"/><circle cx="2270.7" cy="2190.1" r="2.5"/><circle cx="2280.6" cy="2190.1" r="2.5"/><circle cx="2290.6" cy="2190.1" r="2.5"/><circle cx="2300.6" cy="2190.1" r="2.5"/><circle cx="2310.6" cy="2190.1" r="2.5"/><circle cx="2320.6" cy="2190.1" r="2.5"/><circle cx="2330.6" cy="2190.1" r="2.5"/><circle cx="2340.6" cy="2190.1" r="2.5"/><circle cx="2350.5" cy="2190.1" r="2.5"/><circle cx="2360.5" cy="2190.1" r="2.5"/><circle cx="2370.5" cy="2190.1" r="2.5"/><circle cx="2380.5" cy="2190.1" r="2.5"/><circle cx="2390.5" cy="2190.1" r="2.5"/><circle cx="2400.5" cy="2190.1" r="2.5"/><circle cx="2410.4" cy="2190.1" r="2.5"/><circle cx="2420.4" cy="2190.1" r="2.5"/><circle cx="2430.4" cy="2190.1" r="2.5"/><circle cx="2440.4" cy="2190.1" r="2.5"/><circle cx="2450.4" cy="2190.1" r="2.5"/><circle cx="2460.4" cy="2190.1" r="2.5"/><circle cx="2470.3" cy="2190.1" r="2.5"/><circle cx="2480.3" cy="2190.1" r="2.5"/><circle cx="2490.3" cy="2190.1" r="2.5"/><circle cx="2500.3" cy="2190.1" r="2.5"/><circle cx="2510.3" cy="2190.1" r="2.5"/><circle cx="2520.3" cy="2190.1" r="2.5"/><circle cx="2530.2" cy="2190.1" r="2.5"/><circle cx="2540.2" cy="2190.1" r="2.5"/><circle cx="2550.2" cy="2190.1" r="2.5"/><circle cx="2560.2" cy="2190.1" r="2.5"/><circle cx="2570.2" cy="2190.1" r="2.5"/><circle cx="2580.2" cy="2190.1" r="2.5"/><circle cx="2590.2" cy="2190.1" r="2.5"/><circle cx="2600.1" cy="2190.1" r="2.5"/><circle cx="2610.1" cy="2190.1" r="2.5"/><circle cx="2620.1" cy="2190.1" r="2.5"/><circle cx="2630.1" cy="2190.1" r="2.5"/><circle cx="2640.1" cy="2190.1" r="2.5"/><circle cx="2650.1" cy="2190.1" r="2.5"/><circle cx="2660.0" cy="2190.1" r="2.5"/><circle cx="1811.4" cy="2200.1" r="2.5"/><circle cx="1821.4" cy="2200.1" r="2.5"/><circle cx="1831.4" cy="2200.1" r="2.5"/><circle cx="1841.4" cy="2200.1" r="2.5"/><circle cx="1851.3" cy="2200.1" r="2.5"/><circle cx="1901.3" cy="2200.1" r="2.5"/><circle cx="1911.2" cy="2200.1" r="2.5"/><circle cx="1921.2" cy="2200.1" r="2.5"/><circle cx="1931.2" cy="2200.1" r="2.5"/><circle cx="1941.2" cy="2200.1" r="2.5"/><circle cx="1951.2" cy="2200.1" r="2.5"/><circle cx="1961.2" cy="2200.1" r="2.5"/><circle cx="1971.1" cy="2200.1" r="2.5"/><circle cx="1981.1" cy="2200.1" r="2.5"/><circle cx="1991.1" cy="2200.1" r="2.5"/><circle cx="2001.1" cy="2200.1" r="2.5"/><circle cx="2011.1" cy="2200.1" r="2.5"/><circle cx="2021.1" cy="2200.1" r="2.5"/><circle cx="2031.0" cy="2200.1" r="2.5"/><circle cx="2041.0" cy="2200.1" r="2.5"/><circle cx="2051.0" cy="2200.1" r="2.5"/><circle cx="2061.0" cy="2200.1" r="2.5"/><circle cx="2071.0" cy="2200.1" r="2.5"/><circle cx="2081.0" cy="2200.1" r="2.5"/><circle cx="2091.0" cy="2200.1" r="2.5"/><circle cx="2200.8" cy="2200.1" r="2.5"/><circle cx="2210.8" cy="2200.1" r="2.5"/><circle cx="2220.7" cy="2200.1" r="2.5"/><circle cx="2230.7" cy="2200.1" r="2.5"/><circle cx="2240.7" cy="2200.1" r="2.5"/><circle cx="2250.7" cy="2200.1" r="2.5"/><circle cx="2260.7" cy="2200.1" r="2.5"/><circle cx="2270.7" cy="2200.1" r="2.5"/><circle cx="2280.6" cy="2200.1" r="2.5"/><circle cx="2290.6" cy="2200.1" r="2.5"/><circle cx="2300.6" cy="2200.1" r="2.5"/><circle cx="2310.6" cy="2200.1" r="2.5"/><circle cx="2320.6" cy="2200.1" r="2.5"/><circle cx="2330.6" cy="2200.1" r="2.5"/><circle cx="2340.6" cy="2200.1" r="2.5"/><circle cx="2350.5" cy="2200.1" r="2.5"/><circle cx="2360.5" cy="2200.1" r="2.5"/><circle cx="2370.5" cy="2200.1" r="2.5"/><circle cx="2380.5" cy="2200.1" r="2.5"/><circle cx="2390.5" cy="2200.1" r="2.5"/><circle cx="2400.5" cy="2200.1" r="2.5"/><circle cx="2410.4" cy="2200.1" r="2.5"/><circle cx="2420.4" cy="2200.1" r="2.5"/><circle cx="2430.4" cy="2200.1" r="2.5"/><circle cx="2440.4" cy="2200.1" r="2.5"/><circle cx="2450.4" cy="2200.1" r="2.5"/><circle cx="2460.4" cy="2200.1" r="2.5"/><circle cx="2470.3" cy="2200.1" r="2.5"/><circle cx="2480.3" cy="2200.1" r="2.5"/><circle cx="2490.3" cy="2200.1" r="2.5"/><circle cx="2500.3" cy="2200.1" r="2.5"/><circle cx="2510.3" cy="2200.1" r="2.5"/><circle cx="2520.3" cy="2200.1" r="2.5"/><circle cx="2530.2" cy="2200.1" r="2.5"/><circle cx="2540.2" cy="2200.1" r="2.5"/><circle cx="2550.2" cy="2200.1" r="2.5"/><circle cx="2560.2" cy="2200.1" r="2.5"/><circle cx="2570.2" cy="2200.1" r="2.5"/><circle cx="2580.2" cy="2200.1" r="2.5"/><circle cx="2590.2" cy="2200.1" r="2.5"/><circle cx="2600.1" cy="2200.1" r="2.5"/><circle cx="2610.1" cy="2200.1" r="2.5"/><circle cx="2620.1" cy="2200.1" r="2.5"/><circle cx="2630.1" cy="2200.1" r="2.5"/><circle cx="2640.1" cy="2200.1" r="2.5"/><circle cx="2650.1" cy="2200.1" r="2.5"/><circle cx="2660.0" cy="2200.1" r="2.5"/><circle cx="1811.4" cy="2210.1" r="2.5"/><circle cx="1821.4" cy="2210.1" r="2.5"/><circle cx="1831.4" cy="2210.1" r="2.5"/><circle cx="1901.3" cy="2210.1" r="2.5"/><circle cx="1911.2" cy="2210.1" r="2.5"/><circle cx="1921.2" cy="2210.1" r="2.5"/><circle cx="1931.2" cy="2210.1" r="2.5"/><circle cx="1941.2" cy="2210.1" r="2.5"/><circle cx="1951.2" cy="2210.1" r="2.5"/><circle cx="1961.2" cy="2210.1" r="2.5"/><circle cx="1971.1" cy="2210.1" r="2.5"/><circle cx="1981.1" cy="2210.1" r="2.5"/><circle cx="1991.1" cy="2210.1" r="2.5"/><circle cx="2001.1" cy="2210.1" r="2.5"/><circle cx="2011.1" cy="2210.1" r="2.5"/><circle cx="2021.1" cy="2210.1" r="2.5"/><circle cx="2031.0" cy="2210.1" r="2.5"/><circle cx="2041.0" cy="2210.1" r="2.5"/><circle cx="2051.0" cy="2210.1" r="2.5"/><circle cx="2061.0" cy="2210.1" r="2.5"/><circle cx="2071.0" cy="2210.1" r="2.5"/><circle cx="2081.0" cy="2210.1" r="2.5"/><circle cx="2091.0" cy="2210.1" r="2.5"/><circle cx="2200.8" cy="2210.1" r="2.5"/><circle cx="2210.8" cy="2210.1" r="2.5"/><circle cx="2220.7" cy="2210.1" r="2.5"/><circle cx="2230.7" cy="2210.1" r="2.5"/><circle cx="2240.7" cy="2210.1" r="2.5"/><circle cx="2250.7" cy="2210.1" r="2.5"/><circle cx="2260.7" cy="2210.1" r="2.5"/><circle cx="2270.7" cy="2210.1" r="2.5"/><circle cx="2280.6" cy="2210.1" r="2.5"/><circle cx="2290.6" cy="2210.1" r="2.5"/><circle cx="2300.6" cy="2210.1" r="2.5"/><circle cx="2310.6" cy="2210.1" r="2.5"/><circle cx="2320.6" cy="2210.1" r="2.5"/><circle cx="2330.6" cy="2210.1" r="2.5"/><circle cx="2340.6" cy="2210.1" r="2.5"/><circle cx="2350.5" cy="2210.1" r="2.5"/><circle cx="2360.5" cy="2210.1" r="2.5"/><circle cx="2370.5" cy="2210.1" r="2.5"/><circle cx="2380.5" cy="2210.1" r="2.5"/><circle cx="2390.5" cy="2210.1" r="2.5"/><circle cx="2400.5" cy="2210.1" r="2.5"/><circle cx="2410.4" cy="2210.1" r="2.5"/><circle cx="2420.4" cy="2210.1" r="2.5"/><circle cx="2430.4" cy="2210.1" r="2.5"/><circle cx="2440.4" cy="2210.1" r="2.5"/><circle cx="2450.4" cy="2210.1" r="2.5"/><circle cx="2460.4" cy="2210.1" r="2.5"/><circle cx="2470.3" cy="2210.1" r="2.5"/><circle cx="2480.3" cy="2210.1" r="2.5"/><circle cx="2490.3" cy="2210.1" r="2.5"/><circle cx="2500.3" cy="2210.1" r="2.5"/><circle cx="2510.3" cy="2210.1" r="2.5"/><circle cx="2520.3" cy="2210.1" r="2.5"/><circle cx="2530.2" cy="2210.1" r="2.5"/><circle cx="2540.2" cy="2210.1" r="2.5"/><circle cx="2550.2" cy="2210.1" r="2.5"/><circle cx="2560.2" cy="2210.1" r="2.5"/><circle cx="2570.2" cy="2210.1" r="2.5"/><circle cx="2580.2" cy="2210.1" r="2.5"/><circle cx="2590.2" cy="2210.1" r="2.5"/><circle cx="2600.1" cy="2210.1" r="2.5"/><circle cx="2610.1" cy="2210.1" r="2.5"/><circle cx="2620.1" cy="2210.1" r="2.5"/><circle cx="2630.1" cy="2210.1" r="2.5"/><circle cx="2640.1" cy="2210.1" r="2.5"/><circle cx="2650.1" cy="2210.1" r="2.5"/><circle cx="2660.0" cy="2210.1" r="2.5"/><circle cx="1911.2" cy="2220.1" r="2.5"/><circle cx="1921.2" cy="2220.1" r="2.5"/><circle cx="1931.2" cy="2220.1" r="2.5"/><circle cx="1941.2" cy="2220.1" r="2.5"/><circle cx="1951.2" cy="2220.1" r="2.5"/><circle cx="1961.2" cy="2220.1" r="2.5"/><circle cx="1971.1" cy="2220.1" r="2.5"/><circle cx="1981.1" cy="2220.1" r="2.5"/><circle cx="1991.1" cy="2220.1" r="2.5"/><circle cx="2001.1" cy="2220.1" r="2.5"/><circle cx="2011.1" cy="2220.1" r="2.5"/><circle cx="2021.1" cy="2220.1" r="2.5"/><circle cx="2031.0" cy="2220.1" r="2.5"/><circle cx="2041.0" cy="2220.1" r="2.5"/><circle cx="2051.0" cy="2220.1" r="2.5"/><circle cx="2061.0" cy="2220.1" r="2.5"/><circle cx="2071.0" cy="2220.1" r="2.5"/><circle cx="2081.0" cy="2220.1" r="2.5"/><circle cx="2091.0" cy="2220.1" r="2.5"/><circle cx="2100.9" cy="2220.1" r="2.5"/><circle cx="2220.7" cy="2220.1" r="2.5"/><circle cx="2230.7" cy="2220.1" r="2.5"/><circle cx="2240.7" cy="2220.1" r="2.5"/><circle cx="2250.7" cy="2220.1" r="2.5"/><circle cx="2260.7" cy="2220.1" r="2.5"/><circle cx="2270.7" cy="2220.1" r="2.5"/><circle cx="2280.6" cy="2220.1" r="2.5"/><circle cx="2290.6" cy="2220.1" r="2.5"/><circle cx="2300.6" cy="2220.1" r="2.5"/><circle cx="2310.6" cy="2220.1" r="2.5"/><circle cx="2320.6" cy="2220.1" r="2.5"/><circle cx="2330.6" cy="2220.1" r="2.5"/><circle cx="2340.6" cy="2220.1" r="2.5"/><circle cx="2350.5" cy="2220.1" r="2.5"/><circle cx="2360.5" cy="2220.1" r="2.5"/><circle cx="2370.5" cy="2220.1" r="2.5"/><circle cx="2380.5" cy="2220.1" r="2.5"/><circle cx="2390.5" cy="2220.1" r="2.5"/><circle cx="2400.5" cy="2220.1" r="2.5"/><circle cx="2410.4" cy="2220.1" r="2.5"/><circle cx="2420.4" cy="2220.1" r="2.5"/><circle cx="2430.4" cy="2220.1" r="2.5"/><circle cx="2440.4" cy="2220.1" r="2.5"/><circle cx="2450.4" cy="2220.1" r="2.5"/><circle cx="2460.4" cy="2220.1" r="2.5"/><circle cx="2470.3" cy="2220.1" r="2.5"/><circle cx="2480.3" cy="2220.1" r="2.5"/><circle cx="2490.3" cy="2220.1" r="2.5"/><circle cx="2500.3" cy="2220.1" r="2.5"/><circle cx="2510.3" cy="2220.1" r="2.5"/><circle cx="2520.3" cy="2220.1" r="2.5"/><circle cx="2530.2" cy="2220.1" r="2.5"/><circle cx="2540.2" cy="2220.1" r="2.5"/><circle cx="2550.2" cy="2220.1" r="2.5"/><circle cx="2560.2" cy="2220.1" r="2.5"/><circle cx="2570.2" cy="2220.1" r="2.5"/><circle cx="2580.2" cy="2220.1" r="2.5"/><circle cx="2590.2" cy="2220.1" r="2.5"/><circle cx="2600.1" cy="2220.1" r="2.5"/><circle cx="2610.1" cy="2220.1" r="2.5"/><circle cx="2620.1" cy="2220.1" r="2.5"/><circle cx="2630.1" cy="2220.1" r="2.5"/><circle cx="2640.1" cy="2220.1" r="2.5"/><circle cx="2650.1" cy="2220.1" r="2.5"/><circle cx="2660.0" cy="2220.1" r="2.5"/><circle cx="1921.2" cy="2230.1" r="2.5"/><circle cx="1931.2" cy="2230.1" r="2.5"/><circle cx="1941.2" cy="2230.1" r="2.5"/><circle cx="1951.2" cy="2230.1" r="2.5"/><circle cx="1961.2" cy="2230.1" r="2.5"/><circle cx="1971.1" cy="2230.1" r="2.5"/><circle cx="1981.1" cy="2230.1" r="2.5"/><circle cx="1991.1" cy="2230.1" r="2.5"/><circle cx="2001.1" cy="2230.1" r="2.5"/><circle cx="2011.1" cy="2230.1" r="2.5"/><circle cx="2021.1" cy="2230.1" r="2.5"/><circle cx="2031.0" cy="2230.1" r="2.5"/><circle cx="2041.0" cy="2230.1" r="2.5"/><circle cx="2051.0" cy="2230.1" r="2.5"/><circle cx="2061.0" cy="2230.1" r="2.5"/><circle cx="2071.0" cy="2230.1" r="2.5"/><circle cx="2081.0" cy="2230.1" r="2.5"/><circle cx="2091.0" cy="2230.1" r="2.5"/><circle cx="2100.9" cy="2230.1" r="2.5"/><circle cx="2230.7" cy="2230.1" r="2.5"/><circle cx="2240.7" cy="2230.1" r="2.5"/><circle cx="2250.7" cy="2230.1" r="2.5"/><circle cx="2260.7" cy="2230.1" r="2.5"/><circle cx="2270.7" cy="2230.1" r="2.5"/><circle cx="2280.6" cy="2230.1" r="2.5"/><circle cx="2290.6" cy="2230.1" r="2.5"/><circle cx="2300.6" cy="2230.1" r="2.5"/><circle cx="2310.6" cy="2230.1" r="2.5"/><circle cx="2320.6" cy="2230.1" r="2.5"/><circle cx="2330.6" cy="2230.1" r="2.5"/><circle cx="2340.6" cy="2230.1" r="2.5"/><circle cx="2350.5" cy="2230.1" r="2.5"/><circle cx="2360.5" cy="2230.1" r="2.5"/><circle cx="2370.5" cy="2230.1" r="2.5"/><circle cx="2380.5" cy="2230.1" r="2.5"/><circle cx="2390.5" cy="2230.1" r="2.5"/><circle cx="2400.5" cy="2230.1" r="2.5"/><circle cx="2410.4" cy="2230.1" r="2.5"/><circle cx="2420.4" cy="2230.1" r="2.5"/><circle cx="2430.4" cy="2230.1" r="2.5"/><circle cx="2440.4" cy="2230.1" r="2.5"/><circle cx="2450.4" cy="2230.1" r="2.5"/><circle cx="2460.4" cy="2230.1" r="2.5"/><circle cx="2470.3" cy="2230.1" r="2.5"/><circle cx="2480.3" cy="2230.1" r="2.5"/><circle cx="2490.3" cy="2230.1" r="2.5"/><circle cx="2500.3" cy="2230.1" r="2.5"/><circle cx="2510.3" cy="2230.1" r="2.5"/><circle cx="2520.3" cy="2230.1" r="2.5"/><circle cx="2530.2" cy="2230.1" r="2.5"/><circle cx="2540.2" cy="2230.1" r="2.5"/><circle cx="2550.2" cy="2230.1" r="2.5"/><circle cx="2560.2" cy="2230.1" r="2.5"/><circle cx="2570.2" cy="2230.1" r="2.5"/><circle cx="2580.2" cy="2230.1" r="2.5"/><circle cx="2590.2" cy="2230.1" r="2.5"/><circle cx="2600.1" cy="2230.1" r="2.5"/><circle cx="2610.1" cy="2230.1" r="2.5"/><circle cx="2620.1" cy="2230.1" r="2.5"/><circle cx="2630.1" cy="2230.1" r="2.5"/><circle cx="2640.1" cy="2230.1" r="2.5"/><circle cx="2650.1" cy="2230.1" r="2.5"/><circle cx="2660.0" cy="2230.1" r="2.5"/><circle cx="1921.2" cy="2240.1" r="2.5"/><circle cx="1931.2" cy="2240.1" r="2.5"/><circle cx="1941.2" cy="2240.1" r="2.5"/><circle cx="1951.2" cy="2240.1" r="2.5"/><circle cx="1961.2" cy="2240.1" r="2.5"/><circle cx="1971.1" cy="2240.1" r="2.5"/><circle cx="1981.1" cy="2240.1" r="2.5"/><circle cx="1991.1" cy="2240.1" r="2.5"/><circle cx="2001.1" cy="2240.1" r="2.5"/><circle cx="2011.1" cy="2240.1" r="2.5"/><circle cx="2021.1" cy="2240.1" r="2.5"/><circle cx="2031.0" cy="2240.1" r="2.5"/><circle cx="2041.0" cy="2240.1" r="2.5"/><circle cx="2051.0" cy="2240.1" r="2.5"/><circle cx="2061.0" cy="2240.1" r="2.5"/><circle cx="2071.0" cy="2240.1" r="2.5"/><circle cx="2081.0" cy="2240.1" r="2.5"/><circle cx="2210.8" cy="2240.1" r="2.5"/><circle cx="2220.7" cy="2240.1" r="2.5"/><circle cx="2230.7" cy="2240.1" r="2.5"/><circle cx="2240.7" cy="2240.1" r="2.5"/><circle cx="2250.7" cy="2240.1" r="2.5"/><circle cx="2260.7" cy="2240.1" r="2.5"/><circle cx="2270.7" cy="2240.1" r="2.5"/><circle cx="2280.6" cy="2240.1" r="2.5"/><circle cx="2290.6" cy="2240.1" r="2.5"/><circle cx="2300.6" cy="2240.1" r="2.5"/><circle cx="2310.6" cy="2240.1" r="2.5"/><circle cx="2320.6" cy="2240.1" r="2.5"/><circle cx="2330.6" cy="2240.1" r="2.5"/><circle cx="2340.6" cy="2240.1" r="2.5"/><circle cx="2350.5" cy="2240.1" r="2.5"/><circle cx="2360.5" cy="2240.1" r="2.5"/><circle cx="2370.5" cy="2240.1" r="2.5"/><circle cx="2380.5" cy="2240.1" r="2.5"/><circle cx="2390.5" cy="2240.1" r="2.5"/><circle cx="2400.5" cy="2240.1" r="2.5"/><circle cx="2410.4" cy="2240.1" r="2.5"/><circle cx="2420.4" cy="2240.1" r="2.5"/><circle cx="2430.4" cy="2240.1" r="2.5"/><circle cx="2440.4" cy="2240.1" r="2.5"/><circle cx="2450.4" cy="2240.1" r="2.5"/><circle cx="2460.4" cy="2240.1" r="2.5"/><circle cx="2470.3" cy="2240.1" r="2.5"/><circle cx="2480.3" cy="2240.1" r="2.5"/><circle cx="2490.3" cy="2240.1" r="2.5"/><circle cx="2500.3" cy="2240.1" r="2.5"/><circle cx="2510.3" cy="2240.1" r="2.5"/><circle cx="2520.3" cy="2240.1" r="2.5"/><circle cx="2530.2" cy="2240.1" r="2.5"/><circle cx="2540.2" cy="2240.1" r="2.5"/><circle cx="2550.2" cy="2240.1" r="2.5"/><circle cx="2560.2" cy="2240.1" r="2.5"/><circle cx="2570.2" cy="2240.1" r="2.5"/><circle cx="2580.2" cy="2240.1" r="2.5"/><circle cx="2590.2" cy="2240.1" r="2.5"/><circle cx="2600.1" cy="2240.1" r="2.5"/><circle cx="2610.1" cy="2240.1" r="2.5"/><circle cx="2620.1" cy="2240.1" r="2.5"/><circle cx="2630.1" cy="2240.1" r="2.5"/><circle cx="2640.1" cy="2240.1" r="2.5"/><circle cx="2650.1" cy="2240.1" r="2.5"/><circle cx="2660.0" cy="2240.1" r="2.5"/><circle cx="1921.2" cy="2250.1" r="2.5"/><circle cx="1931.2" cy="2250.1" r="2.5"/><circle cx="1941.2" cy="2250.1" r="2.5"/><circle cx="1951.2" cy="2250.1" r="2.5"/><circle cx="1961.2" cy="2250.1" r="2.5"/><circle cx="1971.1" cy="2250.1" r="2.5"/><circle cx="1981.1" cy="2250.1" r="2.5"/><circle cx="1991.1" cy="2250.1" r="2.5"/><circle cx="2001.1" cy="2250.1" r="2.5"/><circle cx="2011.1" cy="2250.1" r="2.5"/><circle cx="2021.1" cy="2250.1" r="2.5"/><circle cx="2031.0" cy="2250.1" r="2.5"/><circle cx="2041.0" cy="2250.1" r="2.5"/><circle cx="2051.0" cy="2250.1" r="2.5"/><circle cx="2061.0" cy="2250.1" r="2.5"/><circle cx="2210.8" cy="2250.1" r="2.5"/><circle cx="2220.7" cy="2250.1" r="2.5"/><circle cx="2230.7" cy="2250.1" r="2.5"/><circle cx="2240.7" cy="2250.1" r="2.5"/><circle cx="2250.7" cy="2250.1" r="2.5"/><circle cx="2260.7" cy="2250.1" r="2.5"/><circle cx="2270.7" cy="2250.1" r="2.5"/><circle cx="2280.6" cy="2250.1" r="2.5"/><circle cx="2290.6" cy="2250.1" r="2.5"/><circle cx="2300.6" cy="2250.1" r="2.5"/><circle cx="2310.6" cy="2250.1" r="2.5"/><circle cx="2320.6" cy="2250.1" r="2.5"/><circle cx="2330.6" cy="2250.1" r="2.5"/><circle cx="2340.6" cy="2250.1" r="2.5"/><circle cx="2350.5" cy="2250.1" r="2.5"/><circle cx="2360.5" cy="2250.1" r="2.5"/><circle cx="2370.5" cy="2250.1" r="2.5"/><circle cx="2380.5" cy="2250.1" r="2.5"/><circle cx="2390.5" cy="2250.1" r="2.5"/><circle cx="2400.5" cy="2250.1" r="2.5"/><circle cx="2410.4" cy="2250.1" r="2.5"/><circle cx="2420.4" cy="2250.1" r="2.5"/><circle cx="2430.4" cy="2250.1" r="2.5"/><circle cx="2440.4" cy="2250.1" r="2.5"/><circle cx="2450.4" cy="2250.1" r="2.5"/><circle cx="2460.4" cy="2250.1" r="2.5"/><circle cx="2470.3" cy="2250.1" r="2.5"/><circle cx="2480.3" cy="2250.1" r="2.5"/><circle cx="2490.3" cy="2250.1" r="2.5"/><circle cx="2500.3" cy="2250.1" r="2.5"/><circle cx="2510.3" cy="2250.1" r="2.5"/><circle cx="2520.3" cy="2250.1" r="2.5"/><circle cx="2530.2" cy="2250.1" r="2.5"/><circle cx="2540.2" cy="2250.1" r="2.5"/><circle cx="2550.2" cy="2250.1" r="2.5"/><circle cx="2560.2" cy="2250.1" r="2.5"/><circle cx="2570.2" cy="2250.1" r="2.5"/><circle cx="2580.2" cy="2250.1" r="2.5"/><circle cx="2590.2" cy="2250.1" r="2.5"/><circle cx="2600.1" cy="2250.1" r="2.5"/><circle cx="2610.1" cy="2250.1" r="2.5"/><circle cx="2620.1" cy="2250.1" r="2.5"/><circle cx="2630.1" cy="2250.1" r="2.5"/><circle cx="2640.1" cy="2250.1" r="2.5"/><circle cx="2650.1" cy="2250.1" r="2.5"/><circle cx="2660.0" cy="2250.1" r="2.5"/><circle cx="1921.2" cy="2260.1" r="2.5"/><circle cx="1931.2" cy="2260.1" r="2.5"/><circle cx="1941.2" cy="2260.1" r="2.5"/><circle cx="1951.2" cy="2260.1" r="2.5"/><circle cx="1961.2" cy="2260.1" r="2.5"/><circle cx="1971.1" cy="2260.1" r="2.5"/><circle cx="1981.1" cy="2260.1" r="2.5"/><circle cx="1991.1" cy="2260.1" r="2.5"/><circle cx="2001.1" cy="2260.1" r="2.5"/><circle cx="2011.1" cy="2260.1" r="2.5"/><circle cx="2021.1" cy="2260.1" r="2.5"/><circle cx="2031.0" cy="2260.1" r="2.5"/><circle cx="2041.0" cy="2260.1" r="2.5"/><circle cx="2051.0" cy="2260.1" r="2.5"/><circle cx="2210.8" cy="2260.1" r="2.5"/><circle cx="2220.7" cy="2260.1" r="2.5"/><circle cx="2230.7" cy="2260.1" r="2.5"/><circle cx="2240.7" cy="2260.1" r="2.5"/><circle cx="2250.7" cy="2260.1" r="2.5"/><circle cx="2260.7" cy="2260.1" r="2.5"/><circle cx="2270.7" cy="2260.1" r="2.5"/><circle cx="2280.6" cy="2260.1" r="2.5"/><circle cx="2290.6" cy="2260.1" r="2.5"/><circle cx="2300.6" cy="2260.1" r="2.5"/><circle cx="2310.6" cy="2260.1" r="2.5"/><circle cx="2320.6" cy="2260.1" r="2.5"/><circle cx="2330.6" cy="2260.1" r="2.5"/><circle cx="2340.6" cy="2260.1" r="2.5"/><circle cx="2350.5" cy="2260.1" r="2.5"/><circle cx="2360.5" cy="2260.1" r="2.5"/><circle cx="2370.5" cy="2260.1" r="2.5"/><circle cx="2380.5" cy="2260.1" r="2.5"/><circle cx="2390.5" cy="2260.1" r="2.5"/><circle cx="2400.5" cy="2260.1" r="2.5"/><circle cx="2410.4" cy="2260.1" r="2.5"/><circle cx="2420.4" cy="2260.1" r="2.5"/><circle cx="2430.4" cy="2260.1" r="2.5"/><circle cx="2440.4" cy="2260.1" r="2.5"/><circle cx="2450.4" cy="2260.1" r="2.5"/><circle cx="2460.4" cy="2260.1" r="2.5"/><circle cx="2470.3" cy="2260.1" r="2.5"/><circle cx="2480.3" cy="2260.1" r="2.5"/><circle cx="2490.3" cy="2260.1" r="2.5"/><circle cx="2500.3" cy="2260.1" r="2.5"/><circle cx="2510.3" cy="2260.1" r="2.5"/><circle cx="2520.3" cy="2260.1" r="2.5"/><circle cx="2530.2" cy="2260.1" r="2.5"/><circle cx="2540.2" cy="2260.1" r="2.5"/><circle cx="2550.2" cy="2260.1" r="2.5"/><circle cx="2560.2" cy="2260.1" r="2.5"/><circle cx="2570.2" cy="2260.1" r="2.5"/><circle cx="2580.2" cy="2260.1" r="2.5"/><circle cx="2590.2" cy="2260.1" r="2.5"/><circle cx="2600.1" cy="2260.1" r="2.5"/><circle cx="2610.1" cy="2260.1" r="2.5"/><circle cx="2620.1" cy="2260.1" r="2.5"/><circle cx="2630.1" cy="2260.1" r="2.5"/><circle cx="2640.1" cy="2260.1" r="2.5"/><circle cx="2650.1" cy="2260.1" r="2.5"/><circle cx="2660.0" cy="2260.1" r="2.5"/><circle cx="1931.2" cy="2270.1" r="2.5"/><circle cx="1941.2" cy="2270.1" r="2.5"/><circle cx="1951.2" cy="2270.1" r="2.5"/><circle cx="1961.2" cy="2270.1" r="2.5"/><circle cx="1971.1" cy="2270.1" r="2.5"/><circle cx="1981.1" cy="2270.1" r="2.5"/><circle cx="1991.1" cy="2270.1" r="2.5"/><circle cx="2001.1" cy="2270.1" r="2.5"/><circle cx="2011.1" cy="2270.1" r="2.5"/><circle cx="2021.1" cy="2270.1" r="2.5"/><circle cx="2031.0" cy="2270.1" r="2.5"/><circle cx="2041.0" cy="2270.1" r="2.5"/><circle cx="2220.7" cy="2270.1" r="2.5"/><circle cx="2230.7" cy="2270.1" r="2.5"/><circle cx="2240.7" cy="2270.1" r="2.5"/><circle cx="2250.7" cy="2270.1" r="2.5"/><circle cx="2260.7" cy="2270.1" r="2.5"/><circle cx="2270.7" cy="2270.1" r="2.5"/><circle cx="2290.6" cy="2270.1" r="2.5"/><circle cx="2300.6" cy="2270.1" r="2.5"/><circle cx="2310.6" cy="2270.1" r="2.5"/><circle cx="2320.6" cy="2270.1" r="2.5"/><circle cx="2330.6" cy="2270.1" r="2.5"/><circle cx="2340.6" cy="2270.1" r="2.5"/><circle cx="2350.5" cy="2270.1" r="2.5"/><circle cx="2360.5" cy="2270.1" r="2.5"/><circle cx="2370.5" cy="2270.1" r="2.5"/><circle cx="2380.5" cy="2270.1" r="2.5"/><circle cx="2390.5" cy="2270.1" r="2.5"/><circle cx="2400.5" cy="2270.1" r="2.5"/><circle cx="2410.4" cy="2270.1" r="2.5"/><circle cx="2420.4" cy="2270.1" r="2.5"/><circle cx="2430.4" cy="2270.1" r="2.5"/><circle cx="2440.4" cy="2270.1" r="2.5"/><circle cx="2450.4" cy="2270.1" r="2.5"/><circle cx="2460.4" cy="2270.1" r="2.5"/><circle cx="2470.3" cy="2270.1" r="2.5"/><circle cx="2480.3" cy="2270.1" r="2.5"/><circle cx="2490.3" cy="2270.1" r="2.5"/><circle cx="2500.3" cy="2270.1" r="2.5"/><circle cx="2510.3" cy="2270.1" r="2.5"/><circle cx="2520.3" cy="2270.1" r="2.5"/><circle cx="2530.2" cy="2270.1" r="2.5"/><circle cx="2540.2" cy="2270.1" r="2.5"/><circle cx="2550.2" cy="2270.1" r="2.5"/><circle cx="2560.2" cy="2270.1" r="2.5"/><circle cx="2570.2" cy="2270.1" r="2.5"/><circle cx="2580.2" cy="2270.1" r="2.5"/><circle cx="2590.2" cy="2270.1" r="2.5"/><circle cx="2600.1" cy="2270.1" r="2.5"/><circle cx="2610.1" cy="2270.1" r="2.5"/><circle cx="2620.1" cy="2270.1" r="2.5"/><circle cx="2630.1" cy="2270.1" r="2.5"/><circle cx="2640.1" cy="2270.1" r="2.5"/><circle cx="2650.1" cy="2270.1" r="2.5"/><circle cx="2660.0" cy="2270.1" r="2.5"/><circle cx="1931.2" cy="2280.1" r="2.5"/><circle cx="1941.2" cy="2280.1" r="2.5"/><circle cx="1951.2" cy="2280.1" r="2.5"/><circle cx="1961.2" cy="2280.1" r="2.5"/><circle cx="1971.1" cy="2280.1" r="2.5"/><circle cx="1981.1" cy="2280.1" r="2.5"/><circle cx="1991.1" cy="2280.1" r="2.5"/><circle cx="2001.1" cy="2280.1" r="2.5"/><circle cx="2011.1" cy="2280.1" r="2.5"/><circle cx="2021.1" cy="2280.1" r="2.5"/><circle cx="2031.0" cy="2280.1" r="2.5"/><circle cx="2041.0" cy="2280.1" r="2.5"/><circle cx="2210.8" cy="2280.1" r="2.5"/><circle cx="2220.7" cy="2280.1" r="2.5"/><circle cx="2230.7" cy="2280.1" r="2.5"/><circle cx="2240.7" cy="2280.1" r="2.5"/><circle cx="2250.7" cy="2280.1" r="2.5"/><circle cx="2260.7" cy="2280.1" r="2.5"/><circle cx="2270.7" cy="2280.1" r="2.5"/><circle cx="2280.6" cy="2280.1" r="2.5"/><circle cx="2290.6" cy="2280.1" r="2.5"/><circle cx="2300.6" cy="2280.1" r="2.5"/><circle cx="2310.6" cy="2280.1" r="2.5"/><circle cx="2320.6" cy="2280.1" r="2.5"/><circle cx="2330.6" cy="2280.1" r="2.5"/><circle cx="2340.6" cy="2280.1" r="2.5"/><circle cx="2350.5" cy="2280.1" r="2.5"/><circle cx="2360.5" cy="2280.1" r="2.5"/><circle cx="2370.5" cy="2280.1" r="2.5"/><circle cx="2380.5" cy="2280.1" r="2.5"/><circle cx="2390.5" cy="2280.1" r="2.5"/><circle cx="2400.5" cy="2280.1" r="2.5"/><circle cx="2410.4" cy="2280.1" r="2.5"/><circle cx="2420.4" cy="2280.1" r="2.5"/><circle cx="2430.4" cy="2280.1" r="2.5"/><circle cx="2440.4" cy="2280.1" r="2.5"/><circle cx="2450.4" cy="2280.1" r="2.5"/><circle cx="2460.4" cy="2280.1" r="2.5"/><circle cx="2470.3" cy="2280.1" r="2.5"/><circle cx="2480.3" cy="2280.1" r="2.5"/><circle cx="2490.3" cy="2280.1" r="2.5"/><circle cx="2500.3" cy="2280.1" r="2.5"/><circle cx="2510.3" cy="2280.1" r="2.5"/><circle cx="2520.3" cy="2280.1" r="2.5"/><circle cx="2530.2" cy="2280.1" r="2.5"/><circle cx="2540.2" cy="2280.1" r="2.5"/><circle cx="2550.2" cy="2280.1" r="2.5"/><circle cx="2560.2" cy="2280.1" r="2.5"/><circle cx="2570.2" cy="2280.1" r="2.5"/><circle cx="2580.2" cy="2280.1" r="2.5"/><circle cx="2590.2" cy="2280.1" r="2.5"/><circle cx="2600.1" cy="2280.1" r="2.5"/><circle cx="2610.1" cy="2280.1" r="2.5"/><circle cx="2620.1" cy="2280.1" r="2.5"/><circle cx="2630.1" cy="2280.1" r="2.5"/><circle cx="2640.1" cy="2280.1" r="2.5"/><circle cx="2650.1" cy="2280.1" r="2.5"/><circle cx="2660.0" cy="2280.1" r="2.5"/><circle cx="1941.2" cy="2290.0" r="2.5"/><circle cx="1951.2" cy="2290.0" r="2.5"/><circle cx="1961.2" cy="2290.0" r="2.5"/><circle cx="1971.1" cy="2290.0" r="2.5"/><circle cx="1981.1" cy="2290.0" r="2.5"/><circle cx="1991.1" cy="2290.0" r="2.5"/><circle cx="2001.1" cy="2290.0" r="2.5"/><circle cx="2011.1" cy="2290.0" r="2.5"/><circle cx="2021.1" cy="2290.0" r="2.5"/><circle cx="2031.0" cy="2290.0" r="2.5"/><circle cx="2200.8" cy="2290.0" r="2.5"/><circle cx="2210.8" cy="2290.0" r="2.5"/><circle cx="2220.7" cy="2290.0" r="2.5"/><circle cx="2230.7" cy="2290.0" r="2.5"/><circle cx="2240.7" cy="2290.0" r="2.5"/><circle cx="2250.7" cy="2290.0" r="2.5"/><circle cx="2260.7" cy="2290.0" r="2.5"/><circle cx="2270.7" cy="2290.0" r="2.5"/><circle cx="2280.6" cy="2290.0" r="2.5"/><circle cx="2290.6" cy="2290.0" r="2.5"/><circle cx="2300.6" cy="2290.0" r="2.5"/><circle cx="2310.6" cy="2290.0" r="2.5"/><circle cx="2320.6" cy="2290.0" r="2.5"/><circle cx="2330.6" cy="2290.0" r="2.5"/><circle cx="2340.6" cy="2290.0" r="2.5"/><circle cx="2350.5" cy="2290.0" r="2.5"/><circle cx="2360.5" cy="2290.0" r="2.5"/><circle cx="2370.5" cy="2290.0" r="2.5"/><circle cx="2380.5" cy="2290.0" r="2.5"/><circle cx="2390.5" cy="2290.0" r="2.5"/><circle cx="2400.5" cy="2290.0" r="2.5"/><circle cx="2410.4" cy="2290.0" r="2.5"/><circle cx="2420.4" cy="2290.0" r="2.5"/><circle cx="2430.4" cy="2290.0" r="2.5"/><circle cx="2440.4" cy="2290.0" r="2.5"/><circle cx="2450.4" cy="2290.0" r="2.5"/><circle cx="2460.4" cy="2290.0" r="2.5"/><circle cx="2470.3" cy="2290.0" r="2.5"/><circle cx="2480.3" cy="2290.0" r="2.5"/><circle cx="2490.3" cy="2290.0" r="2.5"/><circle cx="2500.3" cy="2290.0" r="2.5"/><circle cx="2510.3" cy="2290.0" r="2.5"/><circle cx="2520.3" cy="2290.0" r="2.5"/><circle cx="2530.2" cy="2290.0" r="2.5"/><circle cx="2540.2" cy="2290.0" r="2.5"/><circle cx="2550.2" cy="2290.0" r="2.5"/><circle cx="2560.2" cy="2290.0" r="2.5"/><circle cx="2570.2" cy="2290.0" r="2.5"/><circle cx="2580.2" cy="2290.0" r="2.5"/><circle cx="2590.2" cy="2290.0" r="2.5"/><circle cx="2600.1" cy="2290.0" r="2.5"/><circle cx="2610.1" cy="2290.0" r="2.5"/><circle cx="2620.1" cy="2290.0" r="2.5"/><circle cx="2630.1" cy="2290.0" r="2.5"/><circle cx="2640.1" cy="2290.0" r="2.5"/><circle cx="2650.1" cy="2290.0" r="2.5"/><circle cx="2660.0" cy="2290.0" r="2.5"/><circle cx="1951.2" cy="2300.0" r="2.5"/><circle cx="1961.2" cy="2300.0" r="2.5"/><circle cx="1971.1" cy="2300.0" r="2.5"/><circle cx="1981.1" cy="2300.0" r="2.5"/><circle cx="1991.1" cy="2300.0" r="2.5"/><circle cx="2031.0" cy="2300.0" r="2.5"/><circle cx="2200.8" cy="2300.0" r="2.5"/><circle cx="2210.8" cy="2300.0" r="2.5"/><circle cx="2220.7" cy="2300.0" r="2.5"/><circle cx="2230.7" cy="2300.0" r="2.5"/><circle cx="2240.7" cy="2300.0" r="2.5"/><circle cx="2250.7" cy="2300.0" r="2.5"/><circle cx="2260.7" cy="2300.0" r="2.5"/><circle cx="2270.7" cy="2300.0" r="2.5"/><circle cx="2280.6" cy="2300.0" r="2.5"/><circle cx="2290.6" cy="2300.0" r="2.5"/><circle cx="2300.6" cy="2300.0" r="2.5"/><circle cx="2310.6" cy="2300.0" r="2.5"/><circle cx="2320.6" cy="2300.0" r="2.5"/><circle cx="2330.6" cy="2300.0" r="2.5"/><circle cx="2340.6" cy="2300.0" r="2.5"/><circle cx="2350.5" cy="2300.0" r="2.5"/><circle cx="2360.5" cy="2300.0" r="2.5"/><circle cx="2370.5" cy="2300.0" r="2.5"/><circle cx="2380.5" cy="2300.0" r="2.5"/><circle cx="2390.5" cy="2300.0" r="2.5"/><circle cx="2400.5" cy="2300.0" r="2.5"/><circle cx="2410.4" cy="2300.0" r="2.5"/><circle cx="2420.4" cy="2300.0" r="2.5"/><circle cx="2430.4" cy="2300.0" r="2.5"/><circle cx="2440.4" cy="2300.0" r="2.5"/><circle cx="2450.4" cy="2300.0" r="2.5"/><circle cx="2460.4" cy="2300.0" r="2.5"/><circle cx="2470.3" cy="2300.0" r="2.5"/><circle cx="2480.3" cy="2300.0" r="2.5"/><circle cx="2490.3" cy="2300.0" r="2.5"/><circle cx="2500.3" cy="2300.0" r="2.5"/><circle cx="2510.3" cy="2300.0" r="2.5"/><circle cx="2520.3" cy="2300.0" r="2.5"/><circle cx="2530.2" cy="2300.0" r="2.5"/><circle cx="2540.2" cy="2300.0" r="2.5"/><circle cx="2550.2" cy="2300.0" r="2.5"/><circle cx="2560.2" cy="2300.0" r="2.5"/><circle cx="2570.2" cy="2300.0" r="2.5"/><circle cx="2580.2" cy="2300.0" r="2.5"/><circle cx="2590.2" cy="2300.0" r="2.5"/><circle cx="2600.1" cy="2300.0" r="2.5"/><circle cx="2610.1" cy="2300.0" r="2.5"/><circle cx="2620.1" cy="2300.0" r="2.5"/><circle cx="2630.1" cy="2300.0" r="2.5"/><circle cx="2640.1" cy="2300.0" r="2.5"/><circle cx="2650.1" cy="2300.0" r="2.5"/><circle cx="2660.0" cy="2300.0" r="2.5"/><circle cx="1971.1" cy="2310.0" r="2.5"/><circle cx="1981.1" cy="2310.0" r="2.5"/><circle cx="1991.1" cy="2310.0" r="2.5"/><circle cx="2011.1" cy="2310.0" r="2.5"/><circle cx="2021.1" cy="2310.0" r="2.5"/><circle cx="2031.0" cy="2310.0" r="2.5"/><circle cx="2041.0" cy="2310.0" r="2.5"/><circle cx="2190.8" cy="2310.0" r="2.5"/><circle cx="2200.8" cy="2310.0" r="2.5"/><circle cx="2210.8" cy="2310.0" r="2.5"/><circle cx="2220.7" cy="2310.0" r="2.5"/><circle cx="2230.7" cy="2310.0" r="2.5"/><circle cx="2240.7" cy="2310.0" r="2.5"/><circle cx="2250.7" cy="2310.0" r="2.5"/><circle cx="2260.7" cy="2310.0" r="2.5"/><circle cx="2270.7" cy="2310.0" r="2.5"/><circle cx="2280.6" cy="2310.0" r="2.5"/><circle cx="2290.6" cy="2310.0" r="2.5"/><circle cx="2300.6" cy="2310.0" r="2.5"/><circle cx="2310.6" cy="2310.0" r="2.5"/><circle cx="2320.6" cy="2310.0" r="2.5"/><circle cx="2330.6" cy="2310.0" r="2.5"/><circle cx="2340.6" cy="2310.0" r="2.5"/><circle cx="2350.5" cy="2310.0" r="2.5"/><circle cx="2360.5" cy="2310.0" r="2.5"/><circle cx="2370.5" cy="2310.0" r="2.5"/><circle cx="2380.5" cy="2310.0" r="2.5"/><circle cx="2400.5" cy="2310.0" r="2.5"/><circle cx="2410.4" cy="2310.0" r="2.5"/><circle cx="2420.4" cy="2310.0" r="2.5"/><circle cx="2430.4" cy="2310.0" r="2.5"/><circle cx="2440.4" cy="2310.0" r="2.5"/><circle cx="2450.4" cy="2310.0" r="2.5"/><circle cx="2460.4" cy="2310.0" r="2.5"/><circle cx="2470.3" cy="2310.0" r="2.5"/><circle cx="2480.3" cy="2310.0" r="2.5"/><circle cx="2490.3" cy="2310.0" r="2.5"/><circle cx="2500.3" cy="2310.0" r="2.5"/><circle cx="2510.3" cy="2310.0" r="2.5"/><circle cx="2520.3" cy="2310.0" r="2.5"/><circle cx="2530.2" cy="2310.0" r="2.5"/><circle cx="2540.2" cy="2310.0" r="2.5"/><circle cx="2550.2" cy="2310.0" r="2.5"/><circle cx="2560.2" cy="2310.0" r="2.5"/><circle cx="2570.2" cy="2310.0" r="2.5"/><circle cx="2580.2" cy="2310.0" r="2.5"/><circle cx="2590.2" cy="2310.0" r="2.5"/><circle cx="2600.1" cy="2310.0" r="2.5"/><circle cx="2610.1" cy="2310.0" r="2.5"/><circle cx="2620.1" cy="2310.0" r="2.5"/><circle cx="2630.1" cy="2310.0" r="2.5"/><circle cx="2640.1" cy="2310.0" r="2.5"/><circle cx="2650.1" cy="2310.0" r="2.5"/><circle cx="2660.0" cy="2310.0" r="2.5"/><circle cx="1971.1" cy="2320.0" r="2.5"/><circle cx="1981.1" cy="2320.0" r="2.5"/><circle cx="1991.1" cy="2320.0" r="2.5"/><circle cx="2001.1" cy="2320.0" r="2.5"/><circle cx="2011.1" cy="2320.0" r="2.5"/><circle cx="2021.1" cy="2320.0" r="2.5"/><circle cx="2031.0" cy="2320.0" r="2.5"/><circle cx="2041.0" cy="2320.0" r="2.5"/><circle cx="2051.0" cy="2320.0" r="2.5"/><circle cx="2190.8" cy="2320.0" r="2.5"/><circle cx="2200.8" cy="2320.0" r="2.5"/><circle cx="2210.8" cy="2320.0" r="2.5"/><circle cx="2220.7" cy="2320.0" r="2.5"/><circle cx="2230.7" cy="2320.0" r="2.5"/><circle cx="2240.7" cy="2320.0" r="2.5"/><circle cx="2250.7" cy="2320.0" r="2.5"/><circle cx="2260.7" cy="2320.0" r="2.5"/><circle cx="2270.7" cy="2320.0" r="2.5"/><circle cx="2280.6" cy="2320.0" r="2.5"/><circle cx="2290.6" cy="2320.0" r="2.5"/><circle cx="2300.6" cy="2320.0" r="2.5"/><circle cx="2310.6" cy="2320.0" r="2.5"/><circle cx="2320.6" cy="2320.0" r="2.5"/><circle cx="2330.6" cy="2320.0" r="2.5"/><circle cx="2340.6" cy="2320.0" r="2.5"/><circle cx="2350.5" cy="2320.0" r="2.5"/><circle cx="2360.5" cy="2320.0" r="2.5"/><circle cx="2370.5" cy="2320.0" r="2.5"/><circle cx="2380.5" cy="2320.0" r="2.5"/><circle cx="2420.4" cy="2320.0" r="2.5"/><circle cx="2430.4" cy="2320.0" r="2.5"/><circle cx="2440.4" cy="2320.0" r="2.5"/><circle cx="2450.4" cy="2320.0" r="2.5"/><circle cx="2470.3" cy="2320.0" r="2.5"/><circle cx="2480.3" cy="2320.0" r="2.5"/><circle cx="2490.3" cy="2320.0" r="2.5"/><circle cx="2500.3" cy="2320.0" r="2.5"/><circle cx="2510.3" cy="2320.0" r="2.5"/><circle cx="2520.3" cy="2320.0" r="2.5"/><circle cx="2530.2" cy="2320.0" r="2.5"/><circle cx="2540.2" cy="2320.0" r="2.5"/><circle cx="2550.2" cy="2320.0" r="2.5"/><circle cx="2560.2" cy="2320.0" r="2.5"/><circle cx="2570.2" cy="2320.0" r="2.5"/><circle cx="2580.2" cy="2320.0" r="2.5"/><circle cx="2590.2" cy="2320.0" r="2.5"/><circle cx="2600.1" cy="2320.0" r="2.5"/><circle cx="2610.1" cy="2320.0" r="2.5"/><circle cx="2620.1" cy="2320.0" r="2.5"/><circle cx="2630.1" cy="2320.0" r="2.5"/><circle cx="2640.1" cy="2320.0" r="2.5"/><circle cx="2650.1" cy="2320.0" r="2.5"/><circle cx="2660.0" cy="2320.0" r="2.5"/><circle cx="2001.1" cy="2330.0" r="2.5"/><circle cx="2011.1" cy="2330.0" r="2.5"/><circle cx="2021.1" cy="2330.0" r="2.5"/><circle cx="2041.0" cy="2330.0" r="2.5"/><circle cx="2051.0" cy="2330.0" r="2.5"/><circle cx="2061.0" cy="2330.0" r="2.5"/><circle cx="2190.8" cy="2330.0" r="2.5"/><circle cx="2200.8" cy="2330.0" r="2.5"/><circle cx="2210.8" cy="2330.0" r="2.5"/><circle cx="2220.7" cy="2330.0" r="2.5"/><circle cx="2230.7" cy="2330.0" r="2.5"/><circle cx="2240.7" cy="2330.0" r="2.5"/><circle cx="2250.7" cy="2330.0" r="2.5"/><circle cx="2260.7" cy="2330.0" r="2.5"/><circle cx="2270.7" cy="2330.0" r="2.5"/><circle cx="2280.6" cy="2330.0" r="2.5"/><circle cx="2290.6" cy="2330.0" r="2.5"/><circle cx="2300.6" cy="2330.0" r="2.5"/><circle cx="2310.6" cy="2330.0" r="2.5"/><circle cx="2320.6" cy="2330.0" r="2.5"/><circle cx="2330.6" cy="2330.0" r="2.5"/><circle cx="2340.6" cy="2330.0" r="2.5"/><circle cx="2350.5" cy="2330.0" r="2.5"/><circle cx="2360.5" cy="2330.0" r="2.5"/><circle cx="2370.5" cy="2330.0" r="2.5"/><circle cx="2420.4" cy="2330.0" r="2.5"/><circle cx="2430.4" cy="2330.0" r="2.5"/><circle cx="2440.4" cy="2330.0" r="2.5"/><circle cx="2470.3" cy="2330.0" r="2.5"/><circle cx="2480.3" cy="2330.0" r="2.5"/><circle cx="2490.3" cy="2330.0" r="2.5"/><circle cx="2500.3" cy="2330.0" r="2.5"/><circle cx="2510.3" cy="2330.0" r="2.5"/><circle cx="2520.3" cy="2330.0" r="2.5"/><circle cx="2530.2" cy="2330.0" r="2.5"/><circle cx="2540.2" cy="2330.0" r="2.5"/><circle cx="2550.2" cy="2330.0" r="2.5"/><circle cx="2560.2" cy="2330.0" r="2.5"/><circle cx="2570.2" cy="2330.0" r="2.5"/><circle cx="2580.2" cy="2330.0" r="2.5"/><circle cx="2590.2" cy="2330.0" r="2.5"/><circle cx="2600.1" cy="2330.0" r="2.5"/><circle cx="2610.1" cy="2330.0" r="2.5"/><circle cx="2620.1" cy="2330.0" r="2.5"/><circle cx="2630.1" cy="2330.0" r="2.5"/><circle cx="2640.1" cy="2330.0" r="2.5"/><circle cx="2650.1" cy="2330.0" r="2.5"/><circle cx="2660.0" cy="2330.0" r="2.5"/><circle cx="2021.1" cy="2340.0" r="2.5"/><circle cx="2031.0" cy="2340.0" r="2.5"/><circle cx="2041.0" cy="2340.0" r="2.5"/><circle cx="2051.0" cy="2340.0" r="2.5"/><circle cx="2061.0" cy="2340.0" r="2.5"/><circle cx="2071.0" cy="2340.0" r="2.5"/><circle cx="2081.0" cy="2340.0" r="2.5"/><circle cx="2190.8" cy="2340.0" r="2.5"/><circle cx="2200.8" cy="2340.0" r="2.5"/><circle cx="2210.8" cy="2340.0" r="2.5"/><circle cx="2220.7" cy="2340.0" r="2.5"/><circle cx="2230.7" cy="2340.0" r="2.5"/><circle cx="2240.7" cy="2340.0" r="2.5"/><circle cx="2250.7" cy="2340.0" r="2.5"/><circle cx="2260.7" cy="2340.0" r="2.5"/><circle cx="2270.7" cy="2340.0" r="2.5"/><circle cx="2280.6" cy="2340.0" r="2.5"/><circle cx="2290.6" cy="2340.0" r="2.5"/><circle cx="2300.6" cy="2340.0" r="2.5"/><circle cx="2310.6" cy="2340.0" r="2.5"/><circle cx="2320.6" cy="2340.0" r="2.5"/><circle cx="2330.6" cy="2340.0" r="2.5"/><circle cx="2340.6" cy="2340.0" r="2.5"/><circle cx="2350.5" cy="2340.0" r="2.5"/><circle cx="2360.5" cy="2340.0" r="2.5"/><circle cx="2420.4" cy="2340.0" r="2.5"/><circle cx="2430.4" cy="2340.0" r="2.5"/><circle cx="2440.4" cy="2340.0" r="2.5"/><circle cx="2480.3" cy="2340.0" r="2.5"/><circle cx="2490.3" cy="2340.0" r="2.5"/><circle cx="2500.3" cy="2340.0" r="2.5"/><circle cx="2510.3" cy="2340.0" r="2.5"/><circle cx="2520.3" cy="2340.0" r="2.5"/><circle cx="2530.2" cy="2340.0" r="2.5"/><circle cx="2540.2" cy="2340.0" r="2.5"/><circle cx="2550.2" cy="2340.0" r="2.5"/><circle cx="2560.2" cy="2340.0" r="2.5"/><circle cx="2570.2" cy="2340.0" r="2.5"/><circle cx="2580.2" cy="2340.0" r="2.5"/><circle cx="2590.2" cy="2340.0" r="2.5"/><circle cx="2600.1" cy="2340.0" r="2.5"/><circle cx="2610.1" cy="2340.0" r="2.5"/><circle cx="2620.1" cy="2340.0" r="2.5"/><circle cx="2630.1" cy="2340.0" r="2.5"/><circle cx="2640.1" cy="2340.0" r="2.5"/><circle cx="2650.1" cy="2340.0" r="2.5"/><circle cx="2660.0" cy="2340.0" r="2.5"/><circle cx="2021.1" cy="2350.0" r="2.5"/><circle cx="2031.0" cy="2350.0" r="2.5"/><circle cx="2041.0" cy="2350.0" r="2.5"/><circle cx="2051.0" cy="2350.0" r="2.5"/><circle cx="2061.0" cy="2350.0" r="2.5"/><circle cx="2071.0" cy="2350.0" r="2.5"/><circle cx="2081.0" cy="2350.0" r="2.5"/><circle cx="2091.0" cy="2350.0" r="2.5"/><circle cx="2100.9" cy="2350.0" r="2.5"/><circle cx="2200.8" cy="2350.0" r="2.5"/><circle cx="2210.8" cy="2350.0" r="2.5"/><circle cx="2220.7" cy="2350.0" r="2.5"/><circle cx="2230.7" cy="2350.0" r="2.5"/><circle cx="2240.7" cy="2350.0" r="2.5"/><circle cx="2250.7" cy="2350.0" r="2.5"/><circle cx="2260.7" cy="2350.0" r="2.5"/><circle cx="2270.7" cy="2350.0" r="2.5"/><circle cx="2280.6" cy="2350.0" r="2.5"/><circle cx="2290.6" cy="2350.0" r="2.5"/><circle cx="2300.6" cy="2350.0" r="2.5"/><circle cx="2310.6" cy="2350.0" r="2.5"/><circle cx="2320.6" cy="2350.0" r="2.5"/><circle cx="2330.6" cy="2350.0" r="2.5"/><circle cx="2340.6" cy="2350.0" r="2.5"/><circle cx="2350.5" cy="2350.0" r="2.5"/><circle cx="2360.5" cy="2350.0" r="2.5"/><circle cx="2430.4" cy="2350.0" r="2.5"/><circle cx="2440.4" cy="2350.0" r="2.5"/><circle cx="2470.3" cy="2350.0" r="2.5"/><circle cx="2480.3" cy="2350.0" r="2.5"/><circle cx="2490.3" cy="2350.0" r="2.5"/><circle cx="2500.3" cy="2350.0" r="2.5"/><circle cx="2510.3" cy="2350.0" r="2.5"/><circle cx="2520.3" cy="2350.0" r="2.5"/><circle cx="2530.2" cy="2350.0" r="2.5"/><circle cx="2540.2" cy="2350.0" r="2.5"/><circle cx="2550.2" cy="2350.0" r="2.5"/><circle cx="2560.2" cy="2350.0" r="2.5"/><circle cx="2570.2" cy="2350.0" r="2.5"/><circle cx="2580.2" cy="2350.0" r="2.5"/><circle cx="2590.2" cy="2350.0" r="2.5"/><circle cx="2600.1" cy="2350.0" r="2.5"/><circle cx="2610.1" cy="2350.0" r="2.5"/><circle cx="2620.1" cy="2350.0" r="2.5"/><circle cx="2630.1" cy="2350.0" r="2.5"/><circle cx="2640.1" cy="2350.0" r="2.5"/><circle cx="2650.1" cy="2350.0" r="2.5"/><circle cx="2660.0" cy="2350.0" r="2.5"/><circle cx="2041.0" cy="2360.0" r="2.5"/><circle cx="2051.0" cy="2360.0" r="2.5"/><circle cx="2061.0" cy="2360.0" r="2.5"/><circle cx="2071.0" cy="2360.0" r="2.5"/><circle cx="2081.0" cy="2360.0" r="2.5"/><circle cx="2091.0" cy="2360.0" r="2.5"/><circle cx="2100.9" cy="2360.0" r="2.5"/><circle cx="2110.9" cy="2360.0" r="2.5"/><circle cx="2210.8" cy="2360.0" r="2.5"/><circle cx="2220.7" cy="2360.0" r="2.5"/><circle cx="2230.7" cy="2360.0" r="2.5"/><circle cx="2250.7" cy="2360.0" r="2.5"/><circle cx="2260.7" cy="2360.0" r="2.5"/><circle cx="2270.7" cy="2360.0" r="2.5"/><circle cx="2280.6" cy="2360.0" r="2.5"/><circle cx="2290.6" cy="2360.0" r="2.5"/><circle cx="2300.6" cy="2360.0" r="2.5"/><circle cx="2310.6" cy="2360.0" r="2.5"/><circle cx="2320.6" cy="2360.0" r="2.5"/><circle cx="2330.6" cy="2360.0" r="2.5"/><circle cx="2340.6" cy="2360.0" r="2.5"/><circle cx="2350.5" cy="2360.0" r="2.5"/><circle cx="2360.5" cy="2360.0" r="2.5"/><circle cx="2470.3" cy="2360.0" r="2.5"/><circle cx="2480.3" cy="2360.0" r="2.5"/><circle cx="2490.3" cy="2360.0" r="2.5"/><circle cx="2500.3" cy="2360.0" r="2.5"/><circle cx="2510.3" cy="2360.0" r="2.5"/><circle cx="2520.3" cy="2360.0" r="2.5"/><circle cx="2530.2" cy="2360.0" r="2.5"/><circle cx="2540.2" cy="2360.0" r="2.5"/><circle cx="2550.2" cy="2360.0" r="2.5"/><circle cx="2560.2" cy="2360.0" r="2.5"/><circle cx="2031.0" cy="2370.0" r="2.5"/><circle cx="2041.0" cy="2370.0" r="2.5"/><circle cx="2051.0" cy="2370.0" r="2.5"/><circle cx="2061.0" cy="2370.0" r="2.5"/><circle cx="2071.0" cy="2370.0" r="2.5"/><circle cx="2081.0" cy="2370.0" r="2.5"/><circle cx="2091.0" cy="2370.0" r="2.5"/><circle cx="2100.9" cy="2370.0" r="2.5"/><circle cx="2110.9" cy="2370.0" r="2.5"/><circle cx="2120.9" cy="2370.0" r="2.5"/><circle cx="2130.9" cy="2370.0" r="2.5"/><circle cx="2260.7" cy="2370.0" r="2.5"/><circle cx="2270.7" cy="2370.0" r="2.5"/><circle cx="2280.6" cy="2370.0" r="2.5"/><circle cx="2290.6" cy="2370.0" r="2.5"/><circle cx="2300.6" cy="2370.0" r="2.5"/><circle cx="2310.6" cy="2370.0" r="2.5"/><circle cx="2320.6" cy="2370.0" r="2.5"/><circle cx="2330.6" cy="2370.0" r="2.5"/><circle cx="2340.6" cy="2370.0" r="2.5"/><circle cx="2350.5" cy="2370.0" r="2.5"/><circle cx="2480.3" cy="2370.0" r="2.5"/><circle cx="2490.3" cy="2370.0" r="2.5"/><circle cx="2500.3" cy="2370.0" r="2.5"/><circle cx="2510.3" cy="2370.0" r="2.5"/><circle cx="2520.3" cy="2370.0" r="2.5"/><circle cx="2530.2" cy="2370.0" r="2.5"/><circle cx="2540.2" cy="2370.0" r="2.5"/><circle cx="2550.2" cy="2370.0" r="2.5"/><circle cx="2560.2" cy="2370.0" r="2.5"/><circle cx="2570.2" cy="2370.0" r="2.5"/><circle cx="2580.2" cy="2370.0" r="2.5"/><circle cx="2590.2" cy="2370.0" r="2.5"/><circle cx="2610.1" cy="2370.0" r="2.5"/><circle cx="2031.0" cy="2379.9" r="2.5"/><circle cx="2041.0" cy="2379.9" r="2.5"/><circle cx="2051.0" cy="2379.9" r="2.5"/><circle cx="2061.0" cy="2379.9" r="2.5"/><circle cx="2071.0" cy="2379.9" r="2.5"/><circle cx="2081.0" cy="2379.9" r="2.5"/><circle cx="2091.0" cy="2379.9" r="2.5"/><circle cx="2100.9" cy="2379.9" r="2.5"/><circle cx="2110.9" cy="2379.9" r="2.5"/><circle cx="2120.9" cy="2379.9" r="2.5"/><circle cx="2130.9" cy="2379.9" r="2.5"/><circle cx="2140.9" cy="2379.9" r="2.5"/><circle cx="2150.9" cy="2379.9" r="2.5"/><circle cx="2260.7" cy="2379.9" r="2.5"/><circle cx="2270.7" cy="2379.9" r="2.5"/><circle cx="2280.6" cy="2379.9" r="2.5"/><circle cx="2290.6" cy="2379.9" r="2.5"/><circle cx="2300.6" cy="2379.9" r="2.5"/><circle cx="2310.6" cy="2379.9" r="2.5"/><circle cx="2320.6" cy="2379.9" r="2.5"/><circle cx="2330.6" cy="2379.9" r="2.5"/><circle cx="2340.6" cy="2379.9" r="2.5"/><circle cx="2490.3" cy="2379.9" r="2.5"/><circle cx="2500.3" cy="2379.9" r="2.5"/><circle cx="2510.3" cy="2379.9" r="2.5"/><circle cx="2520.3" cy="2379.9" r="2.5"/><circle cx="2530.2" cy="2379.9" r="2.5"/><circle cx="2540.2" cy="2379.9" r="2.5"/><circle cx="2550.2" cy="2379.9" r="2.5"/><circle cx="2560.2" cy="2379.9" r="2.5"/><circle cx="2570.2" cy="2379.9" r="2.5"/><circle cx="2580.2" cy="2379.9" r="2.5"/><circle cx="2590.2" cy="2379.9" r="2.5"/><circle cx="2600.1" cy="2379.9" r="2.5"/><circle cx="2610.1" cy="2379.9" r="2.5"/><circle cx="2620.1" cy="2379.9" r="2.5"/><circle cx="2031.0" cy="2389.9" r="2.5"/><circle cx="2041.0" cy="2389.9" r="2.5"/><circle cx="2051.0" cy="2389.9" r="2.5"/><circle cx="2061.0" cy="2389.9" r="2.5"/><circle cx="2071.0" cy="2389.9" r="2.5"/><circle cx="2081.0" cy="2389.9" r="2.5"/><circle cx="2091.0" cy="2389.9" r="2.5"/><circle cx="2100.9" cy="2389.9" r="2.5"/><circle cx="2110.9" cy="2389.9" r="2.5"/><circle cx="2120.9" cy="2389.9" r="2.5"/><circle cx="2130.9" cy="2389.9" r="2.5"/><circle cx="2140.9" cy="2389.9" r="2.5"/><circle cx="2150.9" cy="2389.9" r="2.5"/><circle cx="2270.7" cy="2389.9" r="2.5"/><circle cx="2280.6" cy="2389.9" r="2.5"/><circle cx="2290.6" cy="2389.9" r="2.5"/><circle cx="2300.6" cy="2389.9" r="2.5"/><circle cx="2310.6" cy="2389.9" r="2.5"/><circle cx="2320.6" cy="2389.9" r="2.5"/><circle cx="2330.6" cy="2389.9" r="2.5"/><circle cx="2500.3" cy="2389.9" r="2.5"/><circle cx="2510.3" cy="2389.9" r="2.5"/><circle cx="2520.3" cy="2389.9" r="2.5"/><circle cx="2530.2" cy="2389.9" r="2.5"/><circle cx="2540.2" cy="2389.9" r="2.5"/><circle cx="2550.2" cy="2389.9" r="2.5"/><circle cx="2560.2" cy="2389.9" r="2.5"/><circle cx="2570.2" cy="2389.9" r="2.5"/><circle cx="2580.2" cy="2389.9" r="2.5"/><circle cx="2590.2" cy="2389.9" r="2.5"/><circle cx="2600.1" cy="2389.9" r="2.5"/><circle cx="2610.1" cy="2389.9" r="2.5"/><circle cx="2041.0" cy="2399.9" r="2.5"/><circle cx="2051.0" cy="2399.9" r="2.5"/><circle cx="2061.0" cy="2399.9" r="2.5"/><circle cx="2071.0" cy="2399.9" r="2.5"/><circle cx="2081.0" cy="2399.9" r="2.5"/><circle cx="2091.0" cy="2399.9" r="2.5"/><circle cx="2100.9" cy="2399.9" r="2.5"/><circle cx="2110.9" cy="2399.9" r="2.5"/><circle cx="2120.9" cy="2399.9" r="2.5"/><circle cx="2130.9" cy="2399.9" r="2.5"/><circle cx="2140.9" cy="2399.9" r="2.5"/><circle cx="2270.7" cy="2399.9" r="2.5"/><circle cx="2280.6" cy="2399.9" r="2.5"/><circle cx="2290.6" cy="2399.9" r="2.5"/><circle cx="2300.6" cy="2399.9" r="2.5"/><circle cx="2310.6" cy="2399.9" r="2.5"/><circle cx="2320.6" cy="2399.9" r="2.5"/><circle cx="2330.6" cy="2399.9" r="2.5"/><circle cx="2340.6" cy="2399.9" r="2.5"/><circle cx="2360.5" cy="2399.9" r="2.5"/><circle cx="2510.3" cy="2399.9" r="2.5"/><circle cx="2520.3" cy="2399.9" r="2.5"/><circle cx="2530.2" cy="2399.9" r="2.5"/><circle cx="2540.2" cy="2399.9" r="2.5"/><circle cx="2550.2" cy="2399.9" r="2.5"/><circle cx="2560.2" cy="2399.9" r="2.5"/><circle cx="2570.2" cy="2399.9" r="2.5"/><circle cx="2580.2" cy="2399.9" r="2.5"/><circle cx="2590.2" cy="2399.9" r="2.5"/><circle cx="2600.1" cy="2399.9" r="2.5"/></g><circle cx="1994" cy="2265" r="26.5" fill="#1a4fb5" fill-opacity=".38"/><circle cx="1994" cy="2265" r="14.2" fill="#1650b0"/><circle cx="1994" cy="2265" r="6.6" fill="#a08fff"/><circle cx="2280.3" cy="2200" r="26.5" fill="#1a4fb5" fill-opacity=".38"/><circle cx="2280.3" cy="2200" r="14.2" fill="#1650b0"/><circle cx="2280.3" cy="2200" r="6.6" fill="#a08fff"/><circle cx="2382" cy="2142" r="26.5" fill="#1a4fb5" fill-opacity=".38"/><circle cx="2382" cy="2142" r="14.2" fill="#1650b0"/><circle cx="2382" cy="2142" r="6.6" fill="#a08fff"/><circle cx="2646" cy="2145" r="26.5" fill="#1a4fb5" fill-opacity=".38"/><circle cx="2646" cy="2145" r="14.2" fill="#1650b0"/><circle cx="2646" cy="2145" r="6.6" fill="#a08fff"/><circle cx="2290" cy="2374.3" r="26.5" fill="#1a4fb5" fill-opacity=".38"/><circle cx="2290" cy="2374.3" r="14.2" fill="#1650b0"/><circle cx="2290" cy="2374.3" r="6.6" fill="#a08fff"/><circle cx="2571.7" cy="2404" r="26.5" fill="#1a4fb5" fill-opacity=".38"/><circle cx="2571.7" cy="2404" r="14.2" fill="#1650b0"/><circle cx="2571.7" cy="2404" r="6.6" fill="#2080ff"/></svg>
<div style="left:2475.5px;top:2152px;width:193.5px;height:207.5px;background:#0a1536;border-radius:14px;box-shadow:0 4px 14px rgba(0,8,30,.55);"></div>
<svg style="left:2490px;top:2200px;width:170px;height:70px" viewBox="2490 2200 170 70"><path d="M2504 2256 A68 68 0 0 1 2517 2216" fill="none" stroke="#1f80ff" stroke-width="10"/></svg>
<span class="t" style="left:2538.01px;top:2235.25px;font-size:27.0px;color:#fff;word-spacing:-0.07em;-webkit-text-stroke:1.0px #fff;transform:scaleX(0.8669);">1.86 K</span>
<span class="t" style="left:2542.86px;top:2262.55px;font-size:17.0px;color:#a9b0ea;-webkit-text-stroke:0.3px #a9b0ea;transform:scaleX(0.9579);">Australia</span>
</main>
</div>
<script>
(function(){var w=window.innerWidth||2880;if(w&&Math.abs(w-2880)>2){var s=w/2880;var a=document.getElementById('app');a.style.transform='scale('+s+')';document.body.style.width=w+'px';document.body.style.height=(2400*s)+'px';}})();
</script>
</body>
</html>
